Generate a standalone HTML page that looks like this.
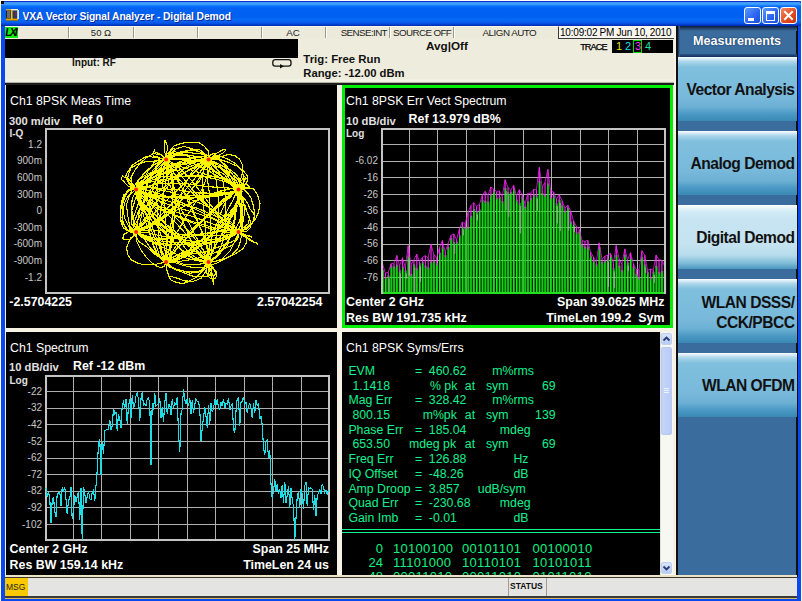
<!DOCTYPE html>
<html><head><meta charset="utf-8"><style>
html,body{margin:0;padding:0;}
body{width:802px;height:601px;overflow:hidden;position:relative;background:#fff;font-family:"Liberation Sans", sans-serif;}
.t{position:absolute;white-space:pre;font-family:"Liberation Sans", sans-serif;}
</style></head><body>
<div style="position:absolute;left:1px;top:1px;width:800px;height:600px;background:#0848f0;"></div><div style="position:absolute;left:1px;top:1px;width:800px;height:25px;background:linear-gradient(to bottom,#0a30c8 0px,#0a30c8 0.8px,#48a8ff 1.6px,#3898ff 3.5px,#0a72fa 5px,#0062f2 7px,#0060f0 16px,#0a6af8 19px,#0858e8 22px,#0040d0 23.5px,#0028a8 25px);border-radius:4px 4px 0 0;"></div><div style="position:absolute;left:1px;top:1px;width:3px;height:3px;background:#000;"></div><div style="position:absolute;left:5px;top:26px;width:792px;height:571px;background:#eeecdc;"></div><svg style="position:absolute;left:6px;top:9px" width="13" height="12" viewBox="0 0 13 12"><rect x="0" y="0" width="12" height="11.5" fill="#2a2010"/><rect x="0" y="0" width="5" height="1.5" fill="#c8a848"/><rect x="5" y="0" width="7" height="1.5" fill="#f4f0e0"/><rect x="0" y="9.5" width="12" height="2" fill="#e0a800"/><rect x="1" y="2" width="3.5" height="7" fill="#6a6a78"/><rect x="5" y="1.5" width="1.6" height="8.5" fill="#d8d020"/><rect x="7" y="2" width="4" height="7" fill="#3a3068"/><rect x="9.5" y="3" width="1.2" height="4" fill="#8a3030"/><rect x="11.2" y="1" width="1.8" height="9" fill="#c8f4ff"/></svg><div class="t" style="left:22.5px;top:12.28px;font-size:10.3px;line-height:10.3px;font-weight:bold;color:#fff;letter-spacing:-0.1px;text-shadow:1px 1px 0 #0a2a9a;">VXA Vector Signal Analyzer - Digital Demod</div><div style="position:absolute;left:744px;top:7px;width:15px;height:15px;border:1px solid #fff;border-radius:3px;background:linear-gradient(135deg,#5a9bff,#2a63f0 60%,#1f50d8);"></div><div style="position:absolute;left:762px;top:7px;width:15px;height:15px;border:1px solid #fff;border-radius:3px;background:linear-gradient(135deg,#5a9bff,#2a63f0 60%,#1f50d8);"></div><div style="position:absolute;left:780px;top:7px;width:15px;height:15px;border:1px solid #fff;border-radius:3px;background:linear-gradient(135deg,#f08a64,#e44c22 55%,#c83412);"></div><div style="position:absolute;left:748px;top:18px;width:6px;height:3px;background:#fff;"></div><div style="position:absolute;left:766px;top:11px;width:7px;height:6px;border:1.5px solid #fff;border-top-width:3px;"></div><svg style="position:absolute;left:781px;top:8px" width="15" height="15"><path d="M4 4 L11 11 M11 4 L4 11" stroke="#fff" stroke-width="2" stroke-linecap="square"/></svg><div style="position:absolute;left:5px;top:26px;width:669px;height:13px;background:#eceada;border-top:1px solid #fbf8ea;box-sizing:border-box;"></div><div style="position:absolute;left:5px;top:27px;width:13px;height:11px;background:#10ec10;"></div><div class="t" style="left:5.2px;top:27.41px;font-size:10.5px;line-height:10.5px;font-weight:bold;color:#000;font-style:italic;letter-spacing:-1.9px;">LXI</div><div style="position:absolute;left:68px;top:27px;width:1px;height:11px;background:#9c9a8c;"></div><div style="position:absolute;left:69px;top:27px;width:1px;height:11px;background:#fff;"></div><div style="position:absolute;left:133px;top:27px;width:1px;height:11px;background:#9c9a8c;"></div><div style="position:absolute;left:134px;top:27px;width:1px;height:11px;background:#fff;"></div><div style="position:absolute;left:197px;top:27px;width:1px;height:11px;background:#9c9a8c;"></div><div style="position:absolute;left:198px;top:27px;width:1px;height:11px;background:#fff;"></div><div style="position:absolute;left:261px;top:27px;width:1px;height:11px;background:#9c9a8c;"></div><div style="position:absolute;left:262px;top:27px;width:1px;height:11px;background:#fff;"></div><div style="position:absolute;left:325px;top:27px;width:1px;height:11px;background:#9c9a8c;"></div><div style="position:absolute;left:326px;top:27px;width:1px;height:11px;background:#fff;"></div><div style="position:absolute;left:389px;top:27px;width:1px;height:11px;background:#9c9a8c;"></div><div style="position:absolute;left:390px;top:27px;width:1px;height:11px;background:#fff;"></div><div style="position:absolute;left:453px;top:27px;width:1px;height:11px;background:#9c9a8c;"></div><div style="position:absolute;left:454px;top:27px;width:1px;height:11px;background:#fff;"></div><div style="position:absolute;left:558px;top:27px;width:1px;height:11px;background:#9c9a8c;"></div><div style="position:absolute;left:559px;top:27px;width:1px;height:11px;background:#fff;"></div><div class="t" style="left:101px;top:27.96px;font-size:9.5px;line-height:9.5px;font-weight:normal;color:#222;transform:translateX(-50%);">50 &#937;</div><div class="t" style="left:293px;top:27.90px;font-size:9.8px;line-height:9.8px;font-weight:normal;color:#222;transform:translateX(-50%);">AC</div><div class="t" style="left:-213px;width:600px;text-align:right;top:27.90px;font-size:9.8px;line-height:9.8px;font-weight:normal;color:#222;letter-spacing:-0.6px;">SENSE:INT</div><div class="t" style="left:393px;top:27.90px;font-size:9.8px;line-height:9.8px;font-weight:normal;color:#222;letter-spacing:-0.6px;">SOURCE OFF</div><div class="t" style="left:509.4px;top:27.90px;font-size:9.8px;line-height:9.8px;font-weight:normal;color:#222;transform:translateX(-50%);letter-spacing:-0.5px;">ALIGN AUTO</div><div style="position:absolute;left:558px;top:26px;width:116px;height:13px;background:#f8f6ee;border-left:1px solid #3a3a3a;border-bottom:1px solid #3a3a3a;border-top:1px solid #fbf8ea;box-sizing:border-box;"></div><div class="t" style="left:560.0px;top:27.54px;font-size:10px;line-height:10px;font-weight:normal;color:#000;word-spacing:-0.3px;letter-spacing:-0.2px;">10:09:02 PM Jun 10, 2010</div><div style="position:absolute;left:5px;top:39px;width:293px;height:19px;background:#000;"></div><div class="t" style="left:72px;top:58.13px;font-size:10px;line-height:10px;font-weight:bold;color:#111;">Input: RF</div><div class="t" style="left:303.3px;top:53.85px;font-size:11.4px;line-height:11.4px;font-weight:bold;color:#111;">Trig: Free Run</div><div class="t" style="left:303.3px;top:67.58px;font-size:11.25px;line-height:11.25px;font-weight:bold;color:#111;">Range: -12.00 dBm</div><div class="t" style="left:426px;top:40.10px;font-size:11.7px;line-height:11.7px;font-weight:bold;color:#111;">Avg|Off</div><div class="t" style="left:580.2px;top:42.51px;font-size:9.2px;line-height:9.2px;font-weight:normal;color:#000;letter-spacing:-0.95px;-webkit-text-stroke:0.25px #000;">TRACE</div><div style="position:absolute;left:612px;top:40px;width:61px;height:13px;background:#000;"></div><div class="t" style="left:616px;top:41.19px;font-size:11px;line-height:11px;font-weight:normal;color:#e8e000;">1</div><div class="t" style="left:625px;top:41.19px;font-size:11px;line-height:11px;font-weight:normal;color:#20d8f0;">2</div><div style="position:absolute;left:633px;top:40px;width:9px;height:13px;border:1px solid #00e000;box-sizing:border-box;"></div><div class="t" style="left:635px;top:41.19px;font-size:11px;line-height:11px;font-weight:normal;color:#ff30ff;">3</div><div class="t" style="left:645px;top:41.19px;font-size:11px;line-height:11px;font-weight:normal;color:#20e0a0;">4</div><svg style="position:absolute;left:271px;top:58px" width="22" height="12" viewBox="0 0 22 12"><rect x="1.8" y="1.6" width="18.2" height="6.6" rx="2.4" ry="2.4" fill="none" stroke="#111" stroke-width="1.3"/><path d="M9 6 L13 8.2 L9 10.6 Z" fill="#111"/></svg><div style="position:absolute;left:5px;top:79px;width:669px;height:3px;background:#f2f0e2;"></div><div style="position:absolute;left:5px;top:82px;width:669px;height:1px;background:#b4b2a2;"></div><div style="position:absolute;left:5px;top:83px;width:669px;height:2px;background:#1c1c1c;"></div><div style="position:absolute;left:5px;top:85px;width:669px;height:491px;background:#f6f3e6;"></div><div style="position:absolute;left:6px;top:85px;width:331px;height:243px;background:#000;"></div><div style="position:absolute;left:342px;top:85px;width:331px;height:243px;background:#000;"></div><div style="position:absolute;left:342px;top:85px;width:331px;height:243px;border:3px solid #00ee00;box-sizing:border-box;"></div><div style="position:absolute;left:6px;top:332px;width:331px;height:243px;background:#000;"></div><div style="position:absolute;left:342px;top:332px;width:331px;height:243px;background:#000;"></div><div class="t" style="left:10px;top:95.09px;font-size:12.3px;line-height:12.3px;font-weight:normal;color:#fff;">Ch1 8PSK Meas Time</div><div class="t" style="left:9px;top:115.82px;font-size:11.2px;line-height:11.2px;font-weight:bold;color:#e0e0e0;">300 m/div</div><div class="t" style="left:72.5px;top:113.90px;font-size:12.4px;line-height:12.4px;font-weight:bold;color:#fff;">Ref 0</div><div class="t" style="left:9.5px;top:129.03px;font-size:10px;line-height:10px;font-weight:bold;color:#e0e0e0;">I-Q</div><div class="t" style="left:-558px;width:600px;text-align:right;top:139.73px;font-size:10px;line-height:10px;font-weight:normal;color:#c8c8c8;">1.2</div><div class="t" style="left:-558px;width:600px;text-align:right;top:156.33px;font-size:10px;line-height:10px;font-weight:normal;color:#c8c8c8;">900m</div><div class="t" style="left:-558px;width:600px;text-align:right;top:172.94px;font-size:10px;line-height:10px;font-weight:normal;color:#c8c8c8;">600m</div><div class="t" style="left:-558px;width:600px;text-align:right;top:189.53px;font-size:10px;line-height:10px;font-weight:normal;color:#c8c8c8;">300m</div><div class="t" style="left:-558px;width:600px;text-align:right;top:206.13px;font-size:10px;line-height:10px;font-weight:normal;color:#c8c8c8;">0</div><div class="t" style="left:-558px;width:600px;text-align:right;top:222.73px;font-size:10px;line-height:10px;font-weight:normal;color:#c8c8c8;">-300m</div><div class="t" style="left:-558px;width:600px;text-align:right;top:239.33px;font-size:10px;line-height:10px;font-weight:normal;color:#c8c8c8;">-600m</div><div class="t" style="left:-558px;width:600px;text-align:right;top:255.94px;font-size:10px;line-height:10px;font-weight:normal;color:#c8c8c8;">-900m</div><div class="t" style="left:-558px;width:600px;text-align:right;top:272.54px;font-size:10px;line-height:10px;font-weight:normal;color:#c8c8c8;">-1.2</div><div class="t" style="left:9.3px;top:296.10px;font-size:12.4px;line-height:12.4px;font-weight:bold;color:#fff;">-2.5704225</div><div class="t" style="left:-277.5px;width:600px;text-align:right;top:296.10px;font-size:12.4px;line-height:12.4px;font-weight:bold;color:#fff;">2.57042254</div><svg style="position:absolute;left:0;top:0" width="802" height="601"><path d="M165.3 261.5 L165.3 258.0 L162.2 251.2 L157.1 239.6 L151.4 225.0 L145.2 211.3 L140.7 201.1 L137.8 191.7 L135.7 189.8 L135.8 193.0 L139.7 202.2 L142.7 212.8 L147.7 227.9 L152.6 242.4 L157.3 253.8 L162.5 260.7 L165.8 262.0 L169.4 256.9 L171.1 247.0 L172.8 233.1 L174.4 216.0 L175.6 198.0 L173.3 182.6 L171.5 169.1 L166.3 159.1 L160.6 154.8 L153.2 153.5 L146.2 157.9 L140.4 163.1 L134.8 170.3 L130.9 177.7 L131.5 183.6 L136.9 189.0 L144.0 193.7 L156.5 196.4 L169.7 196.7 L186.3 196.9 L202.7 198.1 L217.0 195.3 L229.2 193.9 L238.6 190.4 L244.5 185.9 L247.1 181.5 L247.1 175.5 L243.5 170.9 L237.1 166.1 L228.3 162.3 L219.1 159.1 L208.7 159.4 L196.6 160.5 L183.4 164.0 L172.0 168.3 L161.1 174.3 L148.6 179.8 L141.4 183.8 L137.7 187.8 L135.9 190.4 L139.4 190.0 L147.3 187.4 L158.2 183.2 L170.3 179.2 L184.0 172.8 L194.0 168.1 L204.1 163.7 L208.7 160.2 L208.6 156.1 L204.8 154.0 L197.0 153.9 L188.2 152.2 L177.7 152.9 L170.1 154.1 L165.1 156.9 L165.5 159.1 L171.2 163.9 L180.1 166.3 L193.4 170.8 L207.5 174.8 L221.5 178.6 L232.5 183.2 L238.9 186.5 L237.4 190.1 L232.2 192.7 L221.0 195.0 L205.2 195.7 L187.0 196.0 L167.3 197.2 L152.2 196.4 L141.7 193.3 L136.6 189.4 L137.2 184.5 L143.8 179.3 L155.0 172.2 L168.2 166.2 L183.0 160.7 L195.8 157.2 L204.1 156.9 L209.2 159.4 L205.8 166.5 L201.2 175.3 L192.3 188.4 L179.3 202.4 L166.2 213.8 L153.0 224.0 L142.2 230.6 L135.8 232.0 L134.0 227.8 L132.9 218.5 L137.3 206.5 L142.8 191.7 L150.3 178.6 L157.0 166.8 L163.0 161.0 L165.6 159.4 L168.3 164.7 L166.8 176.6 L163.9 191.7 L160.8 211.0 L158.2 228.3 L158.6 244.3 L161.8 255.5 L166.0 262.0 L174.3 261.4 L186.6 255.2 L199.9 245.8 L213.5 232.1 L225.4 217.5 L235.6 205.0 L240.8 194.9 L239.2 189.7 L231.5 188.2 L218.2 192.2 L201.5 197.9 L183.1 207.0 L164.4 216.4 L149.5 225.7 L139.2 229.6 L136.7 231.1 L139.3 229.1 L150.3 224.0 L165.6 215.4 L183.7 206.7 L202.2 198.3 L218.2 191.4 L230.8 188.7 L238.3 188.6 L239.8 196.7 L235.4 205.1 L227.2 218.3 L215.3 232.0 L201.7 244.3 L189.0 255.1 L176.1 260.6 L166.2 262.0 L158.9 257.1 L153.6 246.8 L149.6 231.9 L149.3 216.0 L150.1 198.2 L154.6 182.1 L159.6 168.8 L166.7 160.3 L175.4 155.6 L186.3 155.8 L198.7 159.8 L210.5 167.3 L221.4 175.9 L231.0 182.0 L235.8 188.7 L237.4 189.3 L235.8 188.5 L229.7 182.8 L221.1 176.1 L209.1 168.0 L197.1 160.3 L184.0 154.5 L175.3 154.8 L166.3 159.1 L159.8 169.5 L157.3 183.6 L156.9 201.3 L157.5 219.7 L158.9 236.9 L161.6 250.2 L164.3 259.3 L165.4 262.4 L167.3 257.8 L169.5 247.8 L171.7 231.9 L172.9 214.1 L172.3 195.8 L172.4 179.1 L170.1 166.6 L166.1 158.8 L160.7 158.6 L154.5 162.0 L147.8 171.5 L141.7 183.3 L135.7 197.9 L131.3 212.1 L131.4 223.3 L136.6 232.3 L144.5 238.1 L156.0 239.9 L171.9 238.5 L188.8 237.0 L204.9 233.5 L219.2 230.8 L231.6 230.2 L238.3 231.7 L241.5 235.0 L240.5 241.1 L238.0 248.2 L231.8 255.1 L223.5 259.5 L217.2 263.0 L211.9 264.7 L209.0 261.9 L208.4 257.1 L209.5 246.4 L212.3 235.6 L216.6 224.2 L221.6 211.1 L226.2 200.7 L233.1 193.1 L238.0 189.6 L243.5 189.2 L247.9 193.1 L251.0 198.0 L253.7 206.9 L254.7 214.5 L252.6 222.7 L246.8 228.9 L238.1 231.3 L226.5 232.4 L211.1 228.9 L194.0 223.4 L176.2 216.3 L160.5 208.1 L147.1 200.2 L140.1 194.3 L135.9 189.8 L139.3 187.3 L150.0 187.2 L163.0 188.6 L179.5 190.0 L198.0 193.0 L213.3 193.1 L228.8 192.6 L238.5 189.5 L243.9 184.6 L244.1 178.4 L242.2 171.4 L235.7 163.8 L228.2 159.2 L220.8 156.5 L213.3 156.0 L208.4 159.2 L204.2 166.0 L202.6 176.5 L203.0 190.7 L203.5 205.1 L204.9 220.4 L205.5 236.6 L207.1 249.3 L208.1 261.7 L209.9 271.4 L211.5 277.8 L213.0 281.7 L213.7 284.4 L213.5 281.7 L213.7 277.5 L211.3 271.3 L207.4 261.9 L203.6 251.1 L197.0 238.7 L189.8 224.5 L182.1 211.1 L173.9 195.5 L168.6 181.9 L166.1 169.8 L166.1 159.3 L169.3 151.7 L173.9 145.9 L182.0 143.2 L190.8 142.2 L199.3 143.0 L203.8 145.7 L209.0 151.9 L208.3 158.9 L204.6 168.7 L199.7 180.5 L189.4 192.0 L178.4 204.0 L167.7 215.0 L156.3 223.1 L145.1 229.0 L135.7 232.5 L128.3 230.3 L124.5 225.8 L120.6 219.2 L120.7 209.8 L123.5 201.6 L126.2 193.8 L131.0 189.3 L136.3 190.6 L142.4 193.3 L151.2 203.7 L158.8 214.7 L169.7 228.6 L180.1 241.1 L188.9 253.1 L199.9 260.0 L208.5 260.3 L216.5 257.9 L222.4 250.4 L228.9 239.7 L233.5 225.6 L234.8 213.2 L237.1 201.2 L237.8 192.6 L237.6 189.1 L238.9 191.5 L237.7 197.4 L236.5 207.5 L234.9 220.9 L230.4 233.3 L227.3 245.6 L217.8 254.6 L207.8 262.6 L197.3 264.6 L184.2 264.4 L170.0 259.6 L157.2 256.2 L147.3 247.3 L139.2 241.7 L135.5 235.7 L136.6 232.8 L141.2 230.7 L152.0 229.9 L164.4 231.0 L180.0 234.3 L195.4 235.2 L212.2 236.0 L226.4 235.1 L239.9 231.6 L247.9 226.6 L255.4 219.7 L258.6 211.8 L260.0 203.4 L257.5 194.9 L253.5 188.8 L245.7 187.6 L237.8 189.1 L228.9 196.3 L217.0 204.8 L205.0 217.6 L192.4 230.7 L182.2 243.0 L172.9 253.3 L167.7 260.0 L166.8 261.8 L169.3 258.6 L175.0 251.4 L185.1 239.9 L197.2 226.6 L209.7 212.5 L221.7 202.5 L231.2 193.5 L238.8 189.0 L241.0 189.9 L240.5 195.9 L238.1 204.8 L232.4 215.8 L225.4 228.0 L217.8 240.4 L211.8 252.5 L208.9 261.9 L208.1 269.5 L208.2 274.5 L210.2 275.8 L212.3 275.9 L214.4 275.4 L216.8 272.7 L212.9 267.4 L208.1 262.8 L200.2 255.7 L189.7 246.9 L176.6 236.9 L165.0 228.3 L153.5 217.9 L144.0 207.0 L137.7 198.9 L135.9 190.4 L137.2 181.0 L144.6 175.6 L153.0 171.8 L163.5 167.9 L176.3 165.2 L188.4 163.8 L199.3 160.3 L208.8 160.5 L216.6 156.3 L221.0 154.2 L224.7 151.7 L225.9 149.6 L224.0 149.3 L222.2 150.1 L216.0 153.7 L208.6 160.4 L198.8 168.2 L186.7 180.3 L175.1 192.7 L162.7 203.9 L151.0 216.9 L140.5 224.9 L137.7 230.4 L136.0 231.9 L139.5 227.3 L147.5 220.2 L158.4 208.8 L171.8 195.2 L185.4 181.9 L195.8 170.1 L204.7 161.5 L208.2 160.1 L207.6 161.9 L202.4 168.9 L193.9 179.6 L182.9 193.0 L169.7 205.6 L157.6 218.6 L146.5 227.8 L135.3 231.1 L129.2 231.5 L123.6 228.3 L120.8 221.6 L120.7 212.1 L121.2 202.8 L124.0 194.7 L130.0 189.8 L136.7 189.7 L145.1 192.3 L156.8 199.0 L166.2 208.3 L177.8 219.9 L189.7 232.0 L198.6 243.6 L205.9 253.7 L208.2 263.0 L207.0 267.9 L202.4 270.6 L194.2 271.9 L184.4 271.2 L176.0 269.4 L169.7 267.1 L165.7 264.1 L166.6 261.9 L172.2 260.0 L181.2 255.9 L193.1 253.6 L206.4 251.5 L220.2 246.3 L231.5 242.0 L237.9 238.2 L239.0 231.7 L233.9 226.2 L225.5 220.0 L212.2 214.7 L196.4 207.9 L178.0 204.1 L161.9 199.2 L147.8 194.2 L136.2 189.6 L127.6 185.8 L123.3 180.9 L121.1 179.3 L122.5 175.5 L124.0 177.2 L127.9 178.0 L130.7 181.6 L136.2 188.3 L140.1 199.4 L145.1 211.8 L148.9 224.2 L153.9 237.0 L157.0 247.9 L160.2 257.5 L164.1 261.3 L166.4 262.5 L166.7 256.7 L166.4 246.2 L166.6 233.8 L165.3 217.6 L163.8 201.3 L162.8 185.2 L163.5 170.5 L167.0 159.2 L171.1 153.6 L176.5 148.6 L183.9 146.4 L192.8 148.9 L200.2 152.2 L205.0 155.8 L208.0 158.4 L209.0 159.7 L205.3 161.2 L200.1 157.1 L191.4 155.7 L183.1 154.2 L174.8 151.7 L169.6 152.8 L166.0 154.2 L165.2 159.9 L169.5 166.0 L175.5 176.0 L184.7 184.7 L196.2 196.6 L207.4 206.2 L218.6 215.9 L228.8 225.6 L237.8 231.9 L246.0 237.9 L252.2 241.5 L257.1 243.4 L257.7 244.8 L257.3 243.3 L254.2 242.0 L248.1 238.0 L239.1 231.4 L227.0 225.7 L211.6 217.2 L196.6 209.8 L179.5 201.6 L163.2 194.9 L149.9 191.0 L140.8 189.0 L136.0 190.4 L136.6 193.2 L140.6 201.0 L149.7 210.2 L161.4 220.3 L175.3 231.8 L187.4 243.3 L200.0 252.9 L208.1 261.9 L213.9 269.5 L216.6 274.6 L216.1 276.8 L215.2 278.6 L210.2 278.1 L207.2 274.8 L206.6 269.2 L209.0 261.0 L211.4 253.0 L218.0 240.8 L224.0 229.0 L231.5 216.1 L236.2 205.2 L241.3 196.4 L242.1 191.0 L238.0 189.9 L232.6 193.2 L223.6 200.5 L210.1 213.6 L196.8 227.0 L184.8 240.3 L174.9 250.7 L169.0 258.4 L167.1 261.2 L168.2 259.0 L174.9 251.5 L184.4 240.4 L197.3 225.8 L210.9 211.8 L221.5 200.5 L232.7 192.7 L239.0 190.2 L241.4 192.1 L238.7 200.1 L233.3 210.9 L227.2 225.3 L219.5 238.8 L212.7 249.4 L209.1 258.2 L207.7 262.8 L211.9 261.3 L216.7 256.0 L224.1 246.4 L231.1 235.8 L239.4 221.8 L242.6 209.5 L243.5 198.8 L237.9 189.7 L229.3 182.9 L214.3 178.7 L198.3 175.7 L180.4 176.6 L162.7 176.2 L149.4 181.0 L139.6 184.3 L135.9 190.1 L139.0 196.0 L147.6 202.3 L159.9 210.0 L177.1 215.8 L194.7 222.3 L211.9 227.1 L227.5 230.4 L237.7 232.4 L247.1 231.0 L250.4 227.7 L250.4 221.7 L248.5 215.8 L245.8 208.9 L242.6 201.0 L239.8 194.9 L237.8 189.1 L238.5 185.4 L241.5 183.8 L244.8 184.5 L246.8 184.5 L249.3 187.0 L248.6 188.2 L245.2 188.7 L238.1 189.5 L229.6 188.1 L217.2 187.4 L203.2 186.1 L187.6 183.9 L171.6 183.5 L158.4 183.1 L146.5 187.0 L136.0 189.6 L128.3 195.8 L124.8 202.5 L122.9 210.7 L122.0 217.3 L124.2 225.1 L127.0 230.5 L132.0 232.3 L136.2 233.4 L141.5 227.2 L144.4 221.9 L149.8 211.2 L152.7 199.2 L156.6 189.3 L159.2 178.0 L163.1 168.9 L165.8 160.7 L168.8 153.6 L171.4 149.9 L173.4 148.6 L174.6 148.1 L174.0 149.9 L172.3 152.6 L170.7 155.7 L166.1 160.3 L160.6 165.7 L155.8 169.7 L149.1 174.8 L143.6 179.7 L137.6 184.6 L135.2 188.6 L135.7 190.5 L136.4 189.7 L140.4 186.7 L146.1 182.1 L154.7 176.2 L164.8 169.0 L175.4 164.4 L186.6 158.6 L196.9 156.6 L208.1 160.3 L218.0 165.1 L227.1 174.8 L234.1 186.5 L239.0 198.5 L241.9 210.9 L243.0 221.8 L242.2 227.9 L237.7 231.7 L232.5 231.6 L224.6 224.0 L215.2 215.5 L205.8 203.0 L194.1 191.7 L184.1 179.2 L175.0 168.2 L166.4 159.4 L159.9 153.8 L155.0 152.2 L154.4 149.9 L152.6 154.0 L153.6 156.2 L158.1 157.1 L160.6 158.6 L165.4 158.8 L170.9 158.0 L176.1 155.6 L181.2 151.4 L188.1 150.7 L193.9 149.1 L199.3 149.5 L203.9 153.0 L208.3 159.0 L212.1 169.0 L216.2 180.7 L218.1 194.3 L218.4 209.4 L218.4 223.9 L215.8 238.8 L213.4 251.4 L207.9 262.0 L202.6 271.2 L195.9 277.4 L187.6 282.0 L182.6 283.6 L176.1 282.3 L170.7 279.9 L167.3 272.6 L166.0 262.2 L166.2 248.3 L168.7 234.6 L172.4 217.1 L178.0 201.1 L184.4 186.3 L191.0 173.3 L199.1 164.0 L208.7 159.9 L217.3 159.0 L225.3 164.4 L232.1 173.4 L238.5 185.4 L242.6 197.8 L245.0 210.9 L242.8 222.3 L237.7 230.7 L229.9 237.9 L219.3 241.7 L206.4 242.2 L190.1 241.0 L175.4 238.3 L159.6 235.7 L146.5 232.4 L135.6 233.2 L128.9 231.6 L123.8 234.4 L123.0 237.1 L123.0 239.0 L126.7 239.9 L129.2 239.6 L132.8 237.3 L135.4 231.4 L139.7 225.1 L141.5 215.1 L143.5 203.0 L145.7 192.4 L148.4 181.0 L152.6 170.6 L158.8 163.4 L165.7 159.3 L175.2 158.3 L187.2 160.7 L197.3 165.0 L208.8 171.0 L220.1 177.6 L228.0 182.8 L235.8 187.5 L238.5 189.1 L238.1 189.1 L236.0 185.8 L230.6 183.0 L225.0 174.9 L217.8 170.6 L213.0 165.2 L208.1 161.6 L208.3 158.6 L211.1 160.7 L216.1 162.4 L222.7 166.2 L230.4 169.6 L237.0 175.4 L240.8 181.7 L241.8 185.9 L239.0 189.5 L231.1 193.0 L218.2 193.9 L204.5 196.0 L189.0 197.7 L173.6 196.6 L158.3 195.5 L146.0 193.4 L136.7 189.4 L130.5 184.3 L127.3 178.8 L129.2 172.5 L131.8 165.5 L138.1 161.3 L146.5 156.4 L154.7 157.3 L167.0 159.5 L178.1 166.4 L187.6 175.9 L198.2 188.7 L207.6 201.3 L218.6 214.8 L226.3 223.2 L232.8 230.0 L237.7 231.5 L241.3 229.0 L242.1 220.8 L240.8 209.8 L237.2 196.4 L231.5 183.8 L226.5 171.7 L218.1 164.9 L208.1 159.0 L197.7 161.2 L187.5 165.6 L177.8 174.5 L167.4 186.7 L157.7 200.5 L149.6 212.2 L141.4 223.0 L136.9 231.6 L132.2 237.6 L129.5 240.8 L129.4 241.7 L129.7 240.6 L130.3 238.3 L133.4 236.0 L133.4 233.8 L136.2 232.2 L137.8 231.0 L138.4 231.1 L139.5 230.5 L140.5 231.5 L138.9 231.5 L138.3 232.8 L137.5 232.9 L136.4 232.3 L134.8 231.2 L132.5 230.1 L129.7 228.5 L129.7 229.4 L129.1 227.7 L130.2 229.2 L131.1 230.1 L135.1 232.1 L141.4 235.4 L148.7 239.0 L157.4 244.8 L166.2 249.1 L176.3 254.2 L187.6 258.6 L196.8 260.6 L207.8 262.2 L218.5 260.7 L228.1 257.2 L235.9 253.6 L242.8 248.8 L246.0 243.6 L247.1 238.4 L244.8 234.7 L238.4 231.0 L228.4 230.8 L216.7 232.1 L202.3 233.9 L186.5 235.3 L171.9 238.1 L157.0 238.5 L144.4 235.5 L136.0 231.6 L129.5 225.5 L127.7 215.2 L126.4 204.6 L130.2 193.2 L136.9 182.0 L144.9 172.3 L154.6 164.3 L166.9 159.1 L178.6 158.2 L192.0 158.3 L206.4 162.6 L218.5 166.9 L229.7 172.1 L237.7 178.8 L240.2 184.8 L238.3 188.7 L230.9 193.1 L219.4 195.9 L203.8 197.2 L186.2 198.5 L168.3 197.1 L153.7 194.3 L141.6 192.3 L136.1 188.6 L136.6 186.2 L144.0 181.8 L154.4 176.6 L168.1 172.1 L181.9 169.5 L195.2 164.6 L204.8 161.8 L207.0 159.9 L206.7 158.4 L200.7 159.5 L190.8 160.5 L178.8 163.5 L165.4 168.7 L153.4 174.2 L143.4 182.7 L136.8 189.4 L132.1 198.8 L131.7 209.5 L133.3 219.6 L137.7 228.7 L143.1 237.0 L149.6 247.0 L158.0 255.7 L166.7 262.2 L174.2 269.0 L183.5 272.7 L192.1 275.9 L198.8 276.9 L207.3 276.0 L211.0 274.4 L211.7 268.3 L209.0 262.1 L201.8 252.2 L191.6 240.8 L181.2 228.5 L168.6 215.5 L156.1 203.8 L145.8 193.9 L139.6 189.9 L136.5 190.5 L137.5 194.3 L142.8 203.5 L153.3 216.9 L163.7 230.2 L175.6 243.9 L187.0 255.6 L198.1 260.8 L207.0 262.8 L215.9 257.1 L221.6 245.3 L224.6 231.2 L226.0 214.0 L225.2 195.0 L222.5 178.6 L215.5 166.6 L207.8 159.9 L198.5 159.2 L185.8 162.0 L172.4 170.8 L158.2 183.1 L147.8 196.4 L138.5 211.1 L134.4 221.8 L135.6 231.3 L143.6 238.6 L156.1 242.8 L172.4 244.8 L191.6 244.3 L209.3 243.6 L223.8 239.7 L233.8 235.7 L238.2 232.5 L236.4 228.8 L226.3 223.9 L214.5 219.6 L197.5 213.4 L180.8 208.7 L162.6 202.5 L147.3 195.3 L136.1 190.2 L128.6 183.2 L125.7 176.6 L127.0 172.9 L130.1 168.3 L137.8 164.2 L145.3 161.8 L155.4 160.9 L165.7 159.9 L177.2 159.6 L188.6 160.0 L199.3 160.3 L208.7 163.2 L218.5 167.1 L227.1 172.7 L233.9 179.4 L239.1 191.1 L241.3 201.4 L240.9 213.9 L239.9 227.8 L235.3 240.6 L230.3 250.6 L222.7 258.6 L216.0 261.5 L208.7 262.3 L201.5 256.5 L194.0 247.9 L188.3 233.7 L181.5 218.5 L177.2 202.4 L173.4 186.1 L169.4 171.6 L166.3 159.4 L164.4 150.2 L164.6 143.5 L164.1 140.6 L165.1 140.8 L166.2 142.9 L167.9 146.9 L166.8 151.9 L166.4 159.6 L163.8 167.3 L159.4 176.2 L153.9 183.9 L148.6 193.3 L142.6 202.8 L139.2 212.5 L137.5 222.0 L136.9 232.9 L136.9 241.7 L141.1 250.0 L145.8 256.8 L151.9 262.8 L156.9 266.3 L161.3 267.8 L164.2 266.1 L166.2 262.3 L165.8 255.0 L164.1 245.4 L160.7 234.4 L155.9 222.2 L151.9 211.3 L146.7 201.5 L141.3 194.1 L136.3 188.8 L132.1 188.5 L128.0 189.8 L125.2 195.1 L122.9 201.3 L122.9 209.2 L124.5 217.7 L128.4 225.9 L135.5 231.8 L146.3 237.0 L158.4 240.7 L172.7 242.4 L186.3 242.6 L202.5 240.0 L216.8 239.2 L228.7 236.7 L238.3 232.9 L244.0 227.2 L248.3 223.7 L249.7 217.2 L247.0 212.2 L245.3 206.1 L241.7 200.5 L239.9 194.4 L239.2 189.8 L238.5 185.0 L240.1 181.5 L242.4 179.6 L244.2 176.5 L246.5 178.3 L244.7 179.5 L243.3 183.3 L237.4 189.4 L229.9 197.5 L220.8 204.7 L208.5 215.8 L196.9 224.6 L186.4 234.4 L176.4 245.5 L171.4 253.4 L166.0 262.4 L166.6 268.8 L169.0 276.0 L176.9 278.1 L184.8 281.0 L193.8 281.2 L201.0 278.3 L205.9 271.0 L207.4 261.6 L207.8 248.5 L202.6 233.0 L195.2 215.4 L188.0 197.6 L178.3 181.9 L171.8 168.7 L166.3 160.1 L165.9 159.2 L167.3 163.9 L175.4 174.8 L182.5 189.1 L191.3 208.6 L200.0 227.7 L206.8 244.6 L210.1 255.4 L208.6 261.7 L202.0 261.9 L192.7 258.0 L178.8 247.6 L165.2 233.6 L152.3 221.3 L141.1 207.8 L136.2 196.7 L135.8 190.0 L143.6 186.4 L153.9 188.4 L170.3 191.9 L188.6 198.6 L206.4 205.9 L222.0 215.0 L232.9 223.6 L238.5 232.5 L237.8 238.4 L231.7 245.5 L221.1 250.0 L206.8 256.0 L193.4 259.2 L180.1 261.3 L170.3 261.3 L165.8 262.5 L166.0 260.5 L171.5 257.9 L180.8 253.3 L192.8 249.3 L206.5 243.5 L219.0 240.2 L229.6 234.2 L238.8 232.0 L244.1 230.1 L247.2 227.4 L247.5 227.2 L245.1 227.7 L243.0 227.1 L240.9 229.2 L238.8 231.0 L237.9 231.8 L239.9 233.2 L242.3 234.8 L246.9 237.3 L249.7 236.5 L251.6 237.3 L251.7 236.4 L247.0 235.5 L238.6 232.4 L225.4 228.4 L210.8 223.3 L193.1 216.6 L175.4 211.9 L158.4 206.1 L146.3 199.6 L138.6 193.9 L135.9 189.1 L140.0 185.1 L151.5 181.7 L166.7 178.9 L185.4 176.0 L203.2 176.0 L219.2 177.2 L231.1 181.2 L238.5 189.8 L237.6 199.6 L232.7 211.4 L223.2 225.5 L209.2 237.4 L194.8 248.4 L181.5 256.0 L170.9 262.9 L165.9 261.4 L165.8 255.6 L169.8 247.2 L176.6 232.9 L186.8 215.8 L196.9 200.1 L204.3 183.8 L209.4 169.7 L208.5 158.7 L202.8 152.7 L194.8 150.7 L182.9 151.2 L169.7 156.3 L156.6 163.1 L146.3 170.7 L138.8 179.8 L136.2 189.4 L138.5 199.4 L145.9 210.1 L157.5 221.1 L170.6 231.1 L182.9 239.9 L194.6 248.0 L203.3 256.5 L208.6 262.2 L209.4 265.5 L206.1 268.6 L200.6 267.7 L191.2 267.2 L183.1 265.3 L175.1 262.8 L169.5 262.3 L166.0 261.3 L165.8 263.7 L169.5 266.0 L174.8 268.7 L182.5 270.8 L190.2 273.2 L199.4 271.9 L203.0 268.4 L207.8 261.3 L211.6 252.2 L211.4 238.9 L210.2 223.8 L209.9 207.5 L209.4 193.2 L207.4 179.0 L207.9 167.7 L207.8 161.4 L210.3 154.7 L213.7 153.6 L217.2 156.1 L220.7 160.5 L224.9 166.5 L229.2 173.8 L233.5 181.8 L238.2 189.9 L242.7 196.8 L247.5 202.9 L250.2 209.2 L253.7 213.6 L254.9 218.1 L252.1 222.8 L246.7 228.0 L238.0 232.1 L226.5 237.5 L211.8 239.7 L196.5 242.6 L179.8 244.5 L164.7 245.4 L151.3 241.7 L141.9 237.6 L137.0 232.2 L135.9 223.5 L140.6 214.5 L147.3 204.9 L157.0 193.0 L170.1 182.8 L183.5 173.3 L196.3 165.5 L208.9 160.3 L219.7 157.1 L229.0 154.3 L235.2 155.9 L239.5 159.0 L242.5 165.1 L242.3 172.9 L240.4 180.8 L237.9 188.9 L233.0 200.0 L226.0 212.6 L218.8 223.0 L208.2 233.9 L197.9 242.9 L189.0 250.1 L176.1 257.9 L166.5 261.8 L155.6 264.4 L144.7 264.8 L138.3 263.4 L131.1 259.7 L127.5 254.0 L126.6 247.7 L129.5 240.0" fill="none" stroke="#f8f400" stroke-width="1.1" stroke-linejoin="round" shape-rendering="crispEdges"/><circle cx="238.5" cy="189.6" r="2" fill="#ff2010"/><circle cx="208.5" cy="159.6" r="2" fill="#ff2010"/><circle cx="166.1" cy="159.6" r="2" fill="#ff2010"/><circle cx="136.1" cy="189.6" r="2" fill="#ff2010"/><circle cx="136.1" cy="232.0" r="2" fill="#ff2010"/><circle cx="166.1" cy="262.0" r="2" fill="#ff2010"/><circle cx="208.5" cy="262.0" r="2" fill="#ff2010"/><circle cx="238.5" cy="232.0" r="2" fill="#ff2010"/><rect x="46" y="129" width="283" height="164" fill="none" stroke="#c4c4c4" stroke-width="2"/></svg><div class="t" style="left:346px;top:94.89px;font-size:12.3px;line-height:12.3px;font-weight:normal;color:#fff;">Ch1 8PSK Err Vect Spectrum</div><div class="t" style="left:346px;top:115.82px;font-size:11.2px;line-height:11.2px;font-weight:bold;color:#e0e0e0;">10 dB/div</div><div class="t" style="left:408.6px;top:113.20px;font-size:12.4px;line-height:12.4px;font-weight:bold;color:#fff;">Ref 13.979 dB%</div><div class="t" style="left:346px;top:129.03px;font-size:10px;line-height:10px;font-weight:bold;color:#e0e0e0;">Log</div><div class="t" style="left:-222px;width:600px;text-align:right;top:156.33px;font-size:10px;line-height:10px;font-weight:normal;color:#c8c8c8;">-6.02</div><div class="t" style="left:-222px;width:600px;text-align:right;top:172.94px;font-size:10px;line-height:10px;font-weight:normal;color:#c8c8c8;">-16</div><div class="t" style="left:-222px;width:600px;text-align:right;top:189.53px;font-size:10px;line-height:10px;font-weight:normal;color:#c8c8c8;">-26</div><div class="t" style="left:-222px;width:600px;text-align:right;top:206.13px;font-size:10px;line-height:10px;font-weight:normal;color:#c8c8c8;">-36</div><div class="t" style="left:-222px;width:600px;text-align:right;top:222.73px;font-size:10px;line-height:10px;font-weight:normal;color:#c8c8c8;">-46</div><div class="t" style="left:-222px;width:600px;text-align:right;top:239.33px;font-size:10px;line-height:10px;font-weight:normal;color:#c8c8c8;">-56</div><div class="t" style="left:-222px;width:600px;text-align:right;top:255.94px;font-size:10px;line-height:10px;font-weight:normal;color:#c8c8c8;">-66</div><div class="t" style="left:-222px;width:600px;text-align:right;top:272.54px;font-size:10px;line-height:10px;font-weight:normal;color:#c8c8c8;">-76</div><svg style="position:absolute;left:0;top:0" width="802" height="601"><line x1="409.5" y1="128" x2="409.5" y2="294" stroke="#b0b0b0" stroke-width="1"/><line x1="381" y1="144.5" x2="666" y2="144.5" stroke="#b0b0b0" stroke-width="1"/><line x1="437.5" y1="128" x2="437.5" y2="294" stroke="#b0b0b0" stroke-width="1"/><line x1="381" y1="161.5" x2="666" y2="161.5" stroke="#b0b0b0" stroke-width="1"/><line x1="466.5" y1="128" x2="466.5" y2="294" stroke="#b0b0b0" stroke-width="1"/><line x1="381" y1="177.5" x2="666" y2="177.5" stroke="#b0b0b0" stroke-width="1"/><line x1="494.5" y1="128" x2="494.5" y2="294" stroke="#b0b0b0" stroke-width="1"/><line x1="381" y1="194.5" x2="666" y2="194.5" stroke="#b0b0b0" stroke-width="1"/><line x1="523.5" y1="128" x2="523.5" y2="294" stroke="#b0b0b0" stroke-width="1"/><line x1="381" y1="211.5" x2="666" y2="211.5" stroke="#b0b0b0" stroke-width="1"/><line x1="551.5" y1="128" x2="551.5" y2="294" stroke="#b0b0b0" stroke-width="1"/><line x1="381" y1="227.5" x2="666" y2="227.5" stroke="#b0b0b0" stroke-width="1"/><line x1="580.5" y1="128" x2="580.5" y2="294" stroke="#b0b0b0" stroke-width="1"/><line x1="381" y1="244.5" x2="666" y2="244.5" stroke="#b0b0b0" stroke-width="1"/><line x1="608.5" y1="128" x2="608.5" y2="294" stroke="#b0b0b0" stroke-width="1"/><line x1="381" y1="260.5" x2="666" y2="260.5" stroke="#b0b0b0" stroke-width="1"/><line x1="637.5" y1="128" x2="637.5" y2="294" stroke="#b0b0b0" stroke-width="1"/><line x1="381" y1="277.5" x2="666" y2="277.5" stroke="#b0b0b0" stroke-width="1"/><g opacity="0.9"><rect x="382.00" y="270.0" width="2.0" height="24.0" fill="#00b400"/><rect x="382.00" y="270.0" width="1" height="24.0" fill="#28ff28"/><rect x="384.85" y="276.9" width="2.0" height="17.1" fill="#00b400"/><rect x="384.85" y="276.9" width="1" height="17.1" fill="#28ff28"/><rect x="387.70" y="275.7" width="2.0" height="18.3" fill="#00b400"/><rect x="387.70" y="275.7" width="1" height="18.3" fill="#28ff28"/><rect x="388.70" y="278.7" width="1" height="13.3" fill="#b8b8b8"/><rect x="390.55" y="265.7" width="2.0" height="28.3" fill="#00b400"/><rect x="390.55" y="265.7" width="1" height="28.3" fill="#28ff28"/><rect x="393.40" y="266.5" width="2.0" height="27.5" fill="#00b400"/><rect x="393.40" y="266.5" width="1" height="27.5" fill="#28ff28"/><rect x="396.25" y="264.8" width="2.0" height="29.2" fill="#00b400"/><rect x="396.25" y="264.8" width="1" height="29.2" fill="#28ff28"/><rect x="399.10" y="270.3" width="2.0" height="23.7" fill="#00b400"/><rect x="399.10" y="270.3" width="1" height="23.7" fill="#28ff28"/><rect x="400.10" y="273.3" width="1" height="17.8" fill="#b8b8b8"/><rect x="401.95" y="266.5" width="2.0" height="27.5" fill="#00b400"/><rect x="401.95" y="266.5" width="1" height="27.5" fill="#28ff28"/><rect x="404.80" y="270.4" width="2.0" height="23.6" fill="#00b400"/><rect x="404.80" y="270.4" width="1" height="23.6" fill="#28ff28"/><rect x="405.80" y="273.4" width="1" height="5.3" fill="#b8b8b8"/><rect x="407.65" y="255.7" width="2.0" height="38.3" fill="#00b400"/><rect x="407.65" y="255.7" width="1" height="38.3" fill="#28ff28"/><rect x="408.65" y="258.7" width="1" height="16.5" fill="#b8b8b8"/><rect x="410.50" y="274.1" width="2.0" height="19.9" fill="#00b400"/><rect x="410.50" y="274.1" width="1" height="19.9" fill="#28ff28"/><rect x="413.35" y="264.5" width="2.0" height="29.5" fill="#00b400"/><rect x="413.35" y="264.5" width="1" height="29.5" fill="#28ff28"/><rect x="414.35" y="267.5" width="1" height="24.5" fill="#b8b8b8"/><rect x="416.20" y="268.3" width="2.0" height="25.7" fill="#00b400"/><rect x="416.20" y="268.3" width="1" height="25.7" fill="#28ff28"/><rect x="419.05" y="263.4" width="2.0" height="30.6" fill="#00b400"/><rect x="419.05" y="263.4" width="1" height="30.6" fill="#28ff28"/><rect x="420.05" y="266.4" width="1" height="15.5" fill="#b8b8b8"/><rect x="421.90" y="261.6" width="2.0" height="32.4" fill="#00b400"/><rect x="421.90" y="261.6" width="1" height="32.4" fill="#28ff28"/><rect x="424.75" y="265.8" width="2.0" height="28.2" fill="#00b400"/><rect x="424.75" y="265.8" width="1" height="28.2" fill="#28ff28"/><rect x="427.60" y="267.4" width="2.0" height="26.6" fill="#00b400"/><rect x="427.60" y="267.4" width="1" height="26.6" fill="#28ff28"/><rect x="430.45" y="261.3" width="2.0" height="32.7" fill="#00b400"/><rect x="430.45" y="261.3" width="1" height="32.7" fill="#28ff28"/><rect x="433.30" y="260.9" width="2.0" height="33.1" fill="#00b400"/><rect x="433.30" y="260.9" width="1" height="33.1" fill="#28ff28"/><rect x="436.15" y="263.3" width="2.0" height="30.7" fill="#00b400"/><rect x="436.15" y="263.3" width="1" height="30.7" fill="#28ff28"/><rect x="439.00" y="252.6" width="2.0" height="41.4" fill="#00b400"/><rect x="439.00" y="252.6" width="1" height="41.4" fill="#28ff28"/><rect x="441.85" y="246.9" width="2.0" height="47.1" fill="#00b400"/><rect x="441.85" y="246.9" width="1" height="47.1" fill="#28ff28"/><rect x="444.70" y="255.2" width="2.0" height="38.8" fill="#00b400"/><rect x="444.70" y="255.2" width="1" height="38.8" fill="#28ff28"/><rect x="447.55" y="247.1" width="2.0" height="46.9" fill="#00b400"/><rect x="447.55" y="247.1" width="1" height="46.9" fill="#28ff28"/><rect x="450.40" y="238.1" width="2.0" height="55.9" fill="#00b400"/><rect x="450.40" y="238.1" width="1" height="55.9" fill="#28ff28"/><rect x="453.25" y="241.9" width="2.0" height="52.1" fill="#00b400"/><rect x="453.25" y="241.9" width="1" height="52.1" fill="#28ff28"/><rect x="454.25" y="244.9" width="1" height="9.0" fill="#b8b8b8"/><rect x="456.10" y="241.7" width="2.0" height="52.3" fill="#00b400"/><rect x="456.10" y="241.7" width="1" height="52.3" fill="#28ff28"/><rect x="458.95" y="235.5" width="2.0" height="58.5" fill="#00b400"/><rect x="458.95" y="235.5" width="1" height="58.5" fill="#28ff28"/><rect x="461.80" y="226.3" width="2.0" height="67.7" fill="#00b400"/><rect x="461.80" y="226.3" width="1" height="67.7" fill="#28ff28"/><rect x="462.80" y="229.3" width="1" height="6.3" fill="#b8b8b8"/><rect x="464.65" y="227.1" width="2.0" height="66.9" fill="#00b400"/><rect x="464.65" y="227.1" width="1" height="66.9" fill="#28ff28"/><rect x="467.50" y="226.8" width="2.0" height="67.2" fill="#00b400"/><rect x="467.50" y="226.8" width="1" height="67.2" fill="#28ff28"/><rect x="470.35" y="215.8" width="2.0" height="78.2" fill="#00b400"/><rect x="470.35" y="215.8" width="1" height="78.2" fill="#28ff28"/><rect x="473.20" y="209.0" width="2.0" height="85.0" fill="#00b400"/><rect x="473.20" y="209.0" width="1" height="85.0" fill="#28ff28"/><rect x="476.05" y="211.4" width="2.0" height="82.6" fill="#00b400"/><rect x="476.05" y="211.4" width="1" height="82.6" fill="#28ff28"/><rect x="477.05" y="214.4" width="1" height="6.1" fill="#b8b8b8"/><rect x="478.90" y="209.4" width="2.0" height="84.6" fill="#00b400"/><rect x="478.90" y="209.4" width="1" height="84.6" fill="#28ff28"/><rect x="481.75" y="200.0" width="2.0" height="94.0" fill="#00b400"/><rect x="481.75" y="200.0" width="1" height="94.0" fill="#28ff28"/><rect x="484.60" y="200.9" width="2.0" height="93.1" fill="#00b400"/><rect x="484.60" y="200.9" width="1" height="93.1" fill="#28ff28"/><rect x="487.45" y="201.7" width="2.0" height="92.3" fill="#00b400"/><rect x="487.45" y="201.7" width="1" height="92.3" fill="#28ff28"/><rect x="490.30" y="194.6" width="2.0" height="99.4" fill="#00b400"/><rect x="490.30" y="194.6" width="1" height="99.4" fill="#28ff28"/><rect x="493.15" y="191.1" width="2.0" height="102.9" fill="#00b400"/><rect x="493.15" y="191.1" width="1" height="102.9" fill="#28ff28"/><rect x="496.00" y="197.4" width="2.0" height="96.6" fill="#00b400"/><rect x="496.00" y="197.4" width="1" height="96.6" fill="#28ff28"/><rect x="498.85" y="196.7" width="2.0" height="97.3" fill="#00b400"/><rect x="498.85" y="196.7" width="1" height="97.3" fill="#28ff28"/><rect x="501.70" y="201.2" width="2.0" height="92.8" fill="#00b400"/><rect x="501.70" y="201.2" width="1" height="92.8" fill="#28ff28"/><rect x="504.55" y="188.0" width="2.0" height="106.0" fill="#00b400"/><rect x="504.55" y="188.0" width="1" height="106.0" fill="#28ff28"/><rect x="505.55" y="191.0" width="1" height="19.4" fill="#b8b8b8"/><rect x="507.40" y="192.2" width="2.0" height="101.8" fill="#00b400"/><rect x="507.40" y="192.2" width="1" height="101.8" fill="#28ff28"/><rect x="508.40" y="195.2" width="1" height="21.6" fill="#b8b8b8"/><rect x="510.25" y="192.2" width="2.0" height="101.8" fill="#00b400"/><rect x="510.25" y="192.2" width="1" height="101.8" fill="#28ff28"/><rect x="513.10" y="188.3" width="2.0" height="105.7" fill="#00b400"/><rect x="513.10" y="188.3" width="1" height="105.7" fill="#28ff28"/><rect x="515.95" y="199.6" width="2.0" height="94.4" fill="#00b400"/><rect x="515.95" y="199.6" width="1" height="94.4" fill="#28ff28"/><rect x="518.80" y="202.8" width="2.0" height="91.2" fill="#00b400"/><rect x="518.80" y="202.8" width="1" height="91.2" fill="#28ff28"/><rect x="519.80" y="205.8" width="1" height="27.6" fill="#b8b8b8"/><rect x="521.65" y="196.8" width="2.0" height="97.2" fill="#00b400"/><rect x="521.65" y="196.8" width="1" height="97.2" fill="#28ff28"/><rect x="524.50" y="206.7" width="2.0" height="87.3" fill="#00b400"/><rect x="524.50" y="206.7" width="1" height="87.3" fill="#28ff28"/><rect x="527.35" y="201.4" width="2.0" height="92.6" fill="#00b400"/><rect x="527.35" y="201.4" width="1" height="92.6" fill="#28ff28"/><rect x="530.20" y="198.2" width="2.0" height="95.8" fill="#00b400"/><rect x="530.20" y="198.2" width="1" height="95.8" fill="#28ff28"/><rect x="533.05" y="194.8" width="2.0" height="99.2" fill="#00b400"/><rect x="533.05" y="194.8" width="1" height="99.2" fill="#28ff28"/><rect x="535.90" y="195.6" width="2.0" height="98.4" fill="#00b400"/><rect x="535.90" y="195.6" width="1" height="98.4" fill="#28ff28"/><rect x="536.90" y="198.6" width="1" height="12.3" fill="#b8b8b8"/><rect x="538.75" y="180.9" width="2.0" height="113.1" fill="#00b400"/><rect x="538.75" y="180.9" width="1" height="113.1" fill="#28ff28"/><rect x="541.60" y="193.1" width="2.0" height="100.9" fill="#00b400"/><rect x="541.60" y="193.1" width="1" height="100.9" fill="#28ff28"/><rect x="544.45" y="194.8" width="2.0" height="99.2" fill="#00b400"/><rect x="544.45" y="194.8" width="1" height="99.2" fill="#28ff28"/><rect x="547.30" y="183.6" width="2.0" height="110.4" fill="#00b400"/><rect x="547.30" y="183.6" width="1" height="110.4" fill="#28ff28"/><rect x="550.15" y="197.1" width="2.0" height="96.9" fill="#00b400"/><rect x="550.15" y="197.1" width="1" height="96.9" fill="#28ff28"/><rect x="553.00" y="195.7" width="2.0" height="98.3" fill="#00b400"/><rect x="553.00" y="195.7" width="1" height="98.3" fill="#28ff28"/><rect x="555.85" y="203.2" width="2.0" height="90.8" fill="#00b400"/><rect x="555.85" y="203.2" width="1" height="90.8" fill="#28ff28"/><rect x="556.85" y="206.2" width="1" height="17.2" fill="#b8b8b8"/><rect x="558.70" y="199.8" width="2.0" height="94.2" fill="#00b400"/><rect x="558.70" y="199.8" width="1" height="94.2" fill="#28ff28"/><rect x="559.70" y="202.8" width="1" height="28.4" fill="#b8b8b8"/><rect x="561.55" y="205.5" width="2.0" height="88.5" fill="#00b400"/><rect x="561.55" y="205.5" width="1" height="88.5" fill="#28ff28"/><rect x="564.40" y="210.8" width="2.0" height="83.2" fill="#00b400"/><rect x="564.40" y="210.8" width="1" height="83.2" fill="#28ff28"/><rect x="567.25" y="207.7" width="2.0" height="86.3" fill="#00b400"/><rect x="567.25" y="207.7" width="1" height="86.3" fill="#28ff28"/><rect x="568.25" y="210.7" width="1" height="19.9" fill="#b8b8b8"/><rect x="570.10" y="221.5" width="2.0" height="72.5" fill="#00b400"/><rect x="570.10" y="221.5" width="1" height="72.5" fill="#28ff28"/><rect x="572.95" y="223.3" width="2.0" height="70.7" fill="#00b400"/><rect x="572.95" y="223.3" width="1" height="70.7" fill="#28ff28"/><rect x="573.95" y="226.3" width="1" height="5.8" fill="#b8b8b8"/><rect x="575.80" y="232.3" width="2.0" height="61.7" fill="#00b400"/><rect x="575.80" y="232.3" width="1" height="61.7" fill="#28ff28"/><rect x="578.65" y="231.7" width="2.0" height="62.3" fill="#00b400"/><rect x="578.65" y="231.7" width="1" height="62.3" fill="#28ff28"/><rect x="581.50" y="244.9" width="2.0" height="49.1" fill="#00b400"/><rect x="581.50" y="244.9" width="1" height="49.1" fill="#28ff28"/><rect x="584.35" y="246.6" width="2.0" height="47.4" fill="#00b400"/><rect x="584.35" y="246.6" width="1" height="47.4" fill="#28ff28"/><rect x="587.20" y="246.7" width="2.0" height="47.3" fill="#00b400"/><rect x="587.20" y="246.7" width="1" height="47.3" fill="#28ff28"/><rect x="590.05" y="255.5" width="2.0" height="38.5" fill="#00b400"/><rect x="590.05" y="255.5" width="1" height="38.5" fill="#28ff28"/><rect x="592.90" y="260.2" width="2.0" height="33.8" fill="#00b400"/><rect x="592.90" y="260.2" width="1" height="33.8" fill="#28ff28"/><rect x="595.75" y="264.3" width="2.0" height="29.7" fill="#00b400"/><rect x="595.75" y="264.3" width="1" height="29.7" fill="#28ff28"/><rect x="598.60" y="247.0" width="2.0" height="47.0" fill="#00b400"/><rect x="598.60" y="247.0" width="1" height="47.0" fill="#28ff28"/><rect x="601.45" y="261.8" width="2.0" height="32.2" fill="#00b400"/><rect x="601.45" y="261.8" width="1" height="32.2" fill="#28ff28"/><rect x="604.30" y="260.7" width="2.0" height="33.3" fill="#00b400"/><rect x="604.30" y="260.7" width="1" height="33.3" fill="#28ff28"/><rect x="607.15" y="258.8" width="2.0" height="35.2" fill="#00b400"/><rect x="607.15" y="258.8" width="1" height="35.2" fill="#28ff28"/><rect x="608.15" y="261.8" width="1" height="25.0" fill="#b8b8b8"/><rect x="610.00" y="255.0" width="2.0" height="39.0" fill="#00b400"/><rect x="610.00" y="255.0" width="1" height="39.0" fill="#28ff28"/><rect x="612.85" y="268.3" width="2.0" height="25.7" fill="#00b400"/><rect x="612.85" y="268.3" width="1" height="25.7" fill="#28ff28"/><rect x="613.85" y="271.3" width="1" height="16.7" fill="#b8b8b8"/><rect x="615.70" y="255.0" width="2.0" height="39.0" fill="#00b400"/><rect x="615.70" y="255.0" width="1" height="39.0" fill="#28ff28"/><rect x="618.55" y="265.6" width="2.0" height="28.4" fill="#00b400"/><rect x="618.55" y="265.6" width="1" height="28.4" fill="#28ff28"/><rect x="621.40" y="270.2" width="2.0" height="23.8" fill="#00b400"/><rect x="621.40" y="270.2" width="1" height="23.8" fill="#28ff28"/><rect x="624.25" y="254.9" width="2.0" height="39.1" fill="#00b400"/><rect x="624.25" y="254.9" width="1" height="39.1" fill="#28ff28"/><rect x="627.10" y="262.6" width="2.0" height="31.4" fill="#00b400"/><rect x="627.10" y="262.6" width="1" height="31.4" fill="#28ff28"/><rect x="628.10" y="265.6" width="1" height="5.3" fill="#b8b8b8"/><rect x="629.95" y="257.6" width="2.0" height="36.4" fill="#00b400"/><rect x="629.95" y="257.6" width="1" height="36.4" fill="#28ff28"/><rect x="632.80" y="266.7" width="2.0" height="27.3" fill="#00b400"/><rect x="632.80" y="266.7" width="1" height="27.3" fill="#28ff28"/><rect x="635.65" y="274.3" width="2.0" height="19.7" fill="#00b400"/><rect x="635.65" y="274.3" width="1" height="19.7" fill="#28ff28"/><rect x="638.50" y="277.6" width="2.0" height="16.4" fill="#00b400"/><rect x="638.50" y="277.6" width="1" height="16.4" fill="#28ff28"/><rect x="641.35" y="257.3" width="2.0" height="36.7" fill="#00b400"/><rect x="641.35" y="257.3" width="1" height="36.7" fill="#28ff28"/><rect x="644.20" y="264.5" width="2.0" height="29.5" fill="#00b400"/><rect x="644.20" y="264.5" width="1" height="29.5" fill="#28ff28"/><rect x="645.20" y="267.5" width="1" height="5.7" fill="#b8b8b8"/><rect x="647.05" y="272.1" width="2.0" height="21.9" fill="#00b400"/><rect x="647.05" y="272.1" width="1" height="21.9" fill="#28ff28"/><rect x="649.90" y="277.5" width="2.0" height="16.5" fill="#00b400"/><rect x="649.90" y="277.5" width="1" height="16.5" fill="#28ff28"/><rect x="652.75" y="271.7" width="2.0" height="22.3" fill="#00b400"/><rect x="652.75" y="271.7" width="1" height="22.3" fill="#28ff28"/><rect x="653.75" y="274.7" width="1" height="8.2" fill="#b8b8b8"/><rect x="655.60" y="265.8" width="2.0" height="28.2" fill="#00b400"/><rect x="655.60" y="265.8" width="1" height="28.2" fill="#28ff28"/><rect x="658.45" y="272.1" width="2.0" height="21.9" fill="#00b400"/><rect x="658.45" y="272.1" width="1" height="21.9" fill="#28ff28"/><rect x="661.30" y="271.0" width="2.0" height="23.0" fill="#00b400"/><rect x="661.30" y="271.0" width="1" height="23.0" fill="#28ff28"/><rect x="664.15" y="270.5" width="2.0" height="23.5" fill="#00b400"/><rect x="664.15" y="270.5" width="1" height="23.5" fill="#28ff28"/><path d="M382.5 264.1 L385.4 273.1 L388.2 272.4 L391.1 263.7 L393.9 263.6 L396.8 255.5 L399.6 265.9 L402.5 257.7 L405.3 267.8 L408.2 245.6 L411.0 264.6 L413.9 259.8 L416.7 254.2 L419.6 261.5 L422.4 257.4 L425.3 255.6 L428.1 257.9 L431.0 244.4 L433.8 254.5 L436.7 258.0 L439.5 247.5 L442.4 240.4 L445.2 252.0 L448.1 243.5 L450.9 235.4 L453.8 233.9 L456.6 240.0 L459.5 228.5 L462.3 222.3 L465.2 223.7 L468.0 212.4 L470.9 205.6 L473.7 202.7 L476.6 206.3 L479.4 204.4 L482.3 195.3 L485.1 191.4 L488.0 195.3 L490.8 187.0 L493.7 189.0 L496.5 191.7 L499.4 190.8 L502.2 196.8 L505.1 179.7 L507.9 187.4 L510.8 190.2 L513.6 185.3 L516.5 196.0 L519.3 189.7 L522.2 194.9 L525.0 203.9 L527.9 193.4 L530.7 193.2 L533.6 189.4 L536.4 189.8 L539.3 167.3 L542.1 187.0 L545.0 182.4 L547.8 169.4 L550.7 190.7 L553.5 191.9 L556.4 199.0 L559.2 194.9 L562.1 200.7 L564.9 208.1 L567.8 205.1 L570.6 211.0 L573.5 220.8 L576.3 226.3 L579.2 229.4 L582.0 240.6 L584.9 241.4 L587.7 240.3 L590.6 252.1 L593.4 256.8 L596.3 262.3 L599.1 242.8 L602.0 259.3 L604.8 256.2 L607.7 255.0 L610.5 253.5 L613.4 263.3 L616.2 245.5 L619.1 258.8 L621.9 264.2 L624.8 248.9 L627.6 259.9 L630.5 252.7 L633.3 263.5 L636.2 269.3 L639.0 269.7 L641.9 250.7 L644.7 255.1 L647.6 270.3 L650.4 269.0 L653.3 270.1 L656.1 255.0 L659.0 259.9 L661.8 260.3 L664.7 266.1" fill="none" stroke="#ff20ff" stroke-width="0.8"/><rect x="382.00" y="264.1" width="1.2" height="7.9" fill="#ff30ff"/><rect x="384.85" y="273.1" width="1.2" height="5.8" fill="#ff30ff"/><rect x="387.70" y="272.4" width="1.2" height="5.3" fill="#ff30ff"/><rect x="390.55" y="263.7" width="1.2" height="4.1" fill="#ff30ff"/><rect x="393.40" y="263.6" width="1.2" height="4.8" fill="#ff30ff"/><rect x="396.25" y="255.5" width="1.2" height="11.2" fill="#ff30ff"/><rect x="399.10" y="265.9" width="1.2" height="6.4" fill="#ff30ff"/><rect x="401.95" y="257.7" width="1.2" height="10.7" fill="#ff30ff"/><rect x="404.80" y="267.8" width="1.2" height="4.6" fill="#ff30ff"/><rect x="407.65" y="245.6" width="1.2" height="12.1" fill="#ff30ff"/><rect x="410.50" y="264.6" width="1.2" height="11.5" fill="#ff30ff"/><rect x="413.35" y="259.8" width="1.2" height="6.7" fill="#ff30ff"/><rect x="416.20" y="254.2" width="1.2" height="16.1" fill="#ff30ff"/><rect x="419.05" y="261.5" width="1.2" height="3.9" fill="#ff30ff"/><rect x="421.90" y="257.4" width="1.2" height="6.3" fill="#ff30ff"/><rect x="424.75" y="255.6" width="1.2" height="12.2" fill="#ff30ff"/><rect x="427.60" y="257.9" width="1.2" height="11.4" fill="#ff30ff"/><rect x="430.45" y="244.4" width="1.2" height="18.9" fill="#ff30ff"/><rect x="433.30" y="254.5" width="1.2" height="8.4" fill="#ff30ff"/><rect x="436.15" y="258.0" width="1.2" height="7.4" fill="#ff30ff"/><rect x="439.00" y="247.5" width="1.2" height="7.1" fill="#ff30ff"/><rect x="441.85" y="240.4" width="1.2" height="8.5" fill="#ff30ff"/><rect x="444.70" y="252.0" width="1.2" height="5.1" fill="#ff30ff"/><rect x="447.55" y="243.5" width="1.2" height="5.6" fill="#ff30ff"/><rect x="450.40" y="235.4" width="1.2" height="4.7" fill="#ff30ff"/><rect x="453.25" y="233.9" width="1.2" height="10.1" fill="#ff30ff"/><rect x="456.10" y="240.0" width="1.2" height="3.6" fill="#ff30ff"/><rect x="458.95" y="228.5" width="1.2" height="9.0" fill="#ff30ff"/><rect x="461.80" y="222.3" width="1.2" height="6.0" fill="#ff30ff"/><rect x="464.65" y="223.7" width="1.2" height="5.5" fill="#ff30ff"/><rect x="467.50" y="212.4" width="1.2" height="16.3" fill="#ff30ff"/><rect x="470.35" y="205.6" width="1.2" height="12.2" fill="#ff30ff"/><rect x="473.20" y="202.7" width="1.2" height="8.3" fill="#ff30ff"/><rect x="476.05" y="206.3" width="1.2" height="7.0" fill="#ff30ff"/><rect x="478.90" y="204.4" width="1.2" height="7.0" fill="#ff30ff"/><rect x="481.75" y="195.3" width="1.2" height="6.8" fill="#ff30ff"/><rect x="484.60" y="191.4" width="1.2" height="11.4" fill="#ff30ff"/><rect x="487.45" y="195.3" width="1.2" height="8.4" fill="#ff30ff"/><rect x="490.30" y="187.0" width="1.2" height="9.6" fill="#ff30ff"/><rect x="493.15" y="189.0" width="1.2" height="4.2" fill="#ff30ff"/><rect x="496.00" y="191.7" width="1.2" height="7.7" fill="#ff30ff"/><rect x="498.85" y="190.8" width="1.2" height="7.9" fill="#ff30ff"/><rect x="501.70" y="196.8" width="1.2" height="6.4" fill="#ff30ff"/><rect x="504.55" y="179.7" width="1.2" height="10.3" fill="#ff30ff"/><rect x="507.40" y="187.4" width="1.2" height="6.8" fill="#ff30ff"/><rect x="510.25" y="190.2" width="1.2" height="4.1" fill="#ff30ff"/><rect x="513.10" y="185.3" width="1.2" height="5.0" fill="#ff30ff"/><rect x="515.95" y="196.0" width="1.2" height="5.5" fill="#ff30ff"/><rect x="518.80" y="189.7" width="1.2" height="15.0" fill="#ff30ff"/><rect x="521.65" y="194.9" width="1.2" height="3.9" fill="#ff30ff"/><rect x="524.50" y="203.9" width="1.2" height="4.9" fill="#ff30ff"/><rect x="527.35" y="193.4" width="1.2" height="10.0" fill="#ff30ff"/><rect x="530.20" y="193.2" width="1.2" height="7.0" fill="#ff30ff"/><rect x="533.05" y="189.4" width="1.2" height="7.4" fill="#ff30ff"/><rect x="535.90" y="189.8" width="1.2" height="7.8" fill="#ff30ff"/><rect x="538.75" y="167.3" width="1.2" height="15.6" fill="#ff30ff"/><rect x="541.60" y="187.0" width="1.2" height="8.0" fill="#ff30ff"/><rect x="544.45" y="182.4" width="1.2" height="14.5" fill="#ff30ff"/><rect x="547.30" y="169.4" width="1.2" height="16.3" fill="#ff30ff"/><rect x="550.15" y="190.7" width="1.2" height="8.4" fill="#ff30ff"/><rect x="553.00" y="191.9" width="1.2" height="5.8" fill="#ff30ff"/><rect x="555.85" y="199.0" width="1.2" height="6.2" fill="#ff30ff"/><rect x="558.70" y="194.9" width="1.2" height="6.9" fill="#ff30ff"/><rect x="561.55" y="200.7" width="1.2" height="6.8" fill="#ff30ff"/><rect x="564.40" y="208.1" width="1.2" height="4.7" fill="#ff30ff"/><rect x="567.25" y="205.1" width="1.2" height="4.5" fill="#ff30ff"/><rect x="570.10" y="211.0" width="1.2" height="12.5" fill="#ff30ff"/><rect x="572.95" y="220.8" width="1.2" height="4.5" fill="#ff30ff"/><rect x="575.80" y="226.3" width="1.2" height="8.0" fill="#ff30ff"/><rect x="578.65" y="229.4" width="1.2" height="4.3" fill="#ff30ff"/><rect x="581.50" y="240.6" width="1.2" height="6.3" fill="#ff30ff"/><rect x="584.35" y="241.4" width="1.2" height="7.2" fill="#ff30ff"/><rect x="587.20" y="240.3" width="1.2" height="8.4" fill="#ff30ff"/><rect x="590.05" y="252.1" width="1.2" height="5.4" fill="#ff30ff"/><rect x="592.90" y="256.8" width="1.2" height="5.4" fill="#ff30ff"/><rect x="595.75" y="262.3" width="1.2" height="4.1" fill="#ff30ff"/><rect x="598.60" y="242.8" width="1.2" height="6.2" fill="#ff30ff"/><rect x="601.45" y="259.3" width="1.2" height="4.5" fill="#ff30ff"/><rect x="604.30" y="256.2" width="1.2" height="6.5" fill="#ff30ff"/><rect x="607.15" y="255.0" width="1.2" height="5.8" fill="#ff30ff"/><rect x="610.00" y="253.5" width="1.2" height="3.6" fill="#ff30ff"/><rect x="612.85" y="263.3" width="1.2" height="7.0" fill="#ff30ff"/><rect x="615.70" y="245.5" width="1.2" height="11.5" fill="#ff30ff"/><rect x="618.55" y="258.8" width="1.2" height="8.8" fill="#ff30ff"/><rect x="621.40" y="264.2" width="1.2" height="8.1" fill="#ff30ff"/><rect x="624.25" y="248.9" width="1.2" height="7.9" fill="#ff30ff"/><rect x="627.10" y="259.9" width="1.2" height="4.7" fill="#ff30ff"/><rect x="629.95" y="252.7" width="1.2" height="6.9" fill="#ff30ff"/><rect x="632.80" y="263.5" width="1.2" height="5.2" fill="#ff30ff"/><rect x="635.65" y="269.3" width="1.2" height="6.9" fill="#ff30ff"/><rect x="638.50" y="269.7" width="1.2" height="9.9" fill="#ff30ff"/><rect x="641.35" y="250.7" width="1.2" height="8.6" fill="#ff30ff"/><rect x="644.20" y="255.1" width="1.2" height="11.4" fill="#ff30ff"/><rect x="647.05" y="270.3" width="1.2" height="3.8" fill="#ff30ff"/><rect x="649.90" y="269.0" width="1.2" height="10.5" fill="#ff30ff"/><rect x="652.75" y="270.1" width="1.2" height="3.6" fill="#ff30ff"/><rect x="655.60" y="255.0" width="1.2" height="12.8" fill="#ff30ff"/><rect x="658.45" y="259.9" width="1.2" height="14.2" fill="#ff30ff"/><rect x="661.30" y="260.3" width="1.2" height="12.6" fill="#ff30ff"/><rect x="664.15" y="266.1" width="1.2" height="6.4" fill="#ff30ff"/></g><rect x="382" y="129" width="283" height="164" fill="none" stroke="#c4c4c4" stroke-width="2"/></svg><div style="position:absolute;left:383px;top:292px;width:281px;height:2px;background:#20e020;"></div><div class="t" style="left:346.1px;top:296.00px;font-size:12.4px;line-height:12.4px;font-weight:bold;color:#fff;">Center 2 GHz</div><div class="t" style="left:346.1px;top:311.70px;font-size:12.4px;line-height:12.4px;font-weight:bold;color:#fff;">Res BW 191.735 kHz</div><div class="t" style="left:64.5px;width:600px;text-align:right;top:296.00px;font-size:12.4px;line-height:12.4px;font-weight:bold;color:#fff;">Span 39.0625 MHz</div><div class="t" style="left:64.5px;width:600px;text-align:right;top:311.70px;font-size:12.4px;line-height:12.4px;font-weight:bold;color:#fff;">TimeLen 199.2&nbsp; Sym</div><div class="t" style="left:10px;top:342.09px;font-size:12.3px;line-height:12.3px;font-weight:normal;color:#fff;">Ch1 Spectrum</div><div class="t" style="left:9px;top:362.02px;font-size:11.2px;line-height:11.2px;font-weight:bold;color:#e0e0e0;">10 dB/div</div><div class="t" style="left:73px;top:359.80px;font-size:12.4px;line-height:12.4px;font-weight:bold;color:#fff;">Ref -12 dBm</div><div class="t" style="left:9.5px;top:376.04px;font-size:10px;line-height:10px;font-weight:bold;color:#e0e0e0;">Log</div><div class="t" style="left:-558px;width:600px;text-align:right;top:386.74px;font-size:10px;line-height:10px;font-weight:normal;color:#c8c8c8;">-22</div><div class="t" style="left:-558px;width:600px;text-align:right;top:403.34px;font-size:10px;line-height:10px;font-weight:normal;color:#c8c8c8;">-32</div><div class="t" style="left:-558px;width:600px;text-align:right;top:419.94px;font-size:10px;line-height:10px;font-weight:normal;color:#c8c8c8;">-42</div><div class="t" style="left:-558px;width:600px;text-align:right;top:436.54px;font-size:10px;line-height:10px;font-weight:normal;color:#c8c8c8;">-52</div><div class="t" style="left:-558px;width:600px;text-align:right;top:453.14px;font-size:10px;line-height:10px;font-weight:normal;color:#c8c8c8;">-62</div><div class="t" style="left:-558px;width:600px;text-align:right;top:469.74px;font-size:10px;line-height:10px;font-weight:normal;color:#c8c8c8;">-72</div><div class="t" style="left:-558px;width:600px;text-align:right;top:486.34px;font-size:10px;line-height:10px;font-weight:normal;color:#c8c8c8;">-82</div><div class="t" style="left:-558px;width:600px;text-align:right;top:502.94px;font-size:10px;line-height:10px;font-weight:normal;color:#c8c8c8;">-92</div><div class="t" style="left:-558px;width:600px;text-align:right;top:519.53px;font-size:10px;line-height:10px;font-weight:normal;color:#c8c8c8;">-102</div><svg style="position:absolute;left:0;top:0" width="802" height="601"><line x1="73.5" y1="375" x2="73.5" y2="541" stroke="#b0b0b0" stroke-width="1"/><line x1="45" y1="391.5" x2="330" y2="391.5" stroke="#b0b0b0" stroke-width="1"/><line x1="101.5" y1="375" x2="101.5" y2="541" stroke="#b0b0b0" stroke-width="1"/><line x1="45" y1="408.5" x2="330" y2="408.5" stroke="#b0b0b0" stroke-width="1"/><line x1="130.5" y1="375" x2="130.5" y2="541" stroke="#b0b0b0" stroke-width="1"/><line x1="45" y1="424.5" x2="330" y2="424.5" stroke="#b0b0b0" stroke-width="1"/><line x1="158.5" y1="375" x2="158.5" y2="541" stroke="#b0b0b0" stroke-width="1"/><line x1="45" y1="441.5" x2="330" y2="441.5" stroke="#b0b0b0" stroke-width="1"/><line x1="187.5" y1="375" x2="187.5" y2="541" stroke="#b0b0b0" stroke-width="1"/><line x1="45" y1="458.5" x2="330" y2="458.5" stroke="#b0b0b0" stroke-width="1"/><line x1="215.5" y1="375" x2="215.5" y2="541" stroke="#b0b0b0" stroke-width="1"/><line x1="45" y1="474.5" x2="330" y2="474.5" stroke="#b0b0b0" stroke-width="1"/><line x1="244.5" y1="375" x2="244.5" y2="541" stroke="#b0b0b0" stroke-width="1"/><line x1="45" y1="491.5" x2="330" y2="491.5" stroke="#b0b0b0" stroke-width="1"/><line x1="272.5" y1="375" x2="272.5" y2="541" stroke="#b0b0b0" stroke-width="1"/><line x1="45" y1="507.5" x2="330" y2="507.5" stroke="#b0b0b0" stroke-width="1"/><line x1="301.5" y1="375" x2="301.5" y2="541" stroke="#b0b0b0" stroke-width="1"/><line x1="45" y1="524.5" x2="330" y2="524.5" stroke="#b0b0b0" stroke-width="1"/><rect x="46" y="376" width="283" height="164" fill="none" stroke="#c4c4c4" stroke-width="2"/></svg><svg style="position:absolute;left:0;top:0" width="802" height="601"><path d="M46.0 488.3 L47.2 496.4 L48.5 491.8 L49.8 499.2 L51.0 522.9 L52.2 500.8 L53.5 497.5 L54.8 511.7 L56.0 517.4 L57.2 493.8 L58.5 493.0 L59.8 492.4 L61.0 506.0 L62.2 487.2 L63.5 490.7 L64.8 487.8 L66.0 499.0 L67.2 514.2 L68.5 500.4 L69.8 498.2 L71.0 487.3 L72.2 519.3 L73.5 510.4 L74.8 494.6 L76.0 502.0 L77.2 496.4 L78.5 491.9 L79.8 519.6 L81.0 488.5 L82.2 540.0 L83.5 486.9 L84.8 493.8 L86.0 503.0 L87.2 496.2 L88.5 490.9 L89.8 498.6 L91.0 500.0 L92.2 492.4 L93.5 489.8 L94.8 501.4 L96.0 485.8 L97.2 470.8 L98.5 442.8 L99.8 439.1 L101.0 474.9 L102.2 441.3 L103.5 454.4 L104.8 430.7 L106.0 429.9 L107.2 429.6 L108.5 429.3 L109.8 420.0 L111.0 429.9 L112.2 425.9 L113.5 408.7 L114.8 413.5 L116.0 412.2 L117.2 430.6 L118.5 414.0 L119.8 419.2 L121.0 427.9 L122.2 406.0 L123.5 401.9 L124.8 407.9 L126.0 399.1 L127.2 423.7 L128.5 406.6 L129.8 398.6 L131.0 417.8 L132.2 395.2 L133.5 407.5 L134.8 404.4 L136.0 396.2 L137.2 393.1 L138.5 399.0 L139.8 420.5 L141.0 398.8 L142.2 392.2 L143.5 404.9 L144.8 403.9 L146.0 405.9 L147.2 398.8 L148.5 398.1 L149.8 403.4 L151.0 464.5 L152.2 403.4 L153.5 410.0 L154.8 393.1 L156.0 406.2 L157.2 404.6 L158.5 404.4 L159.8 398.4 L161.0 418.2 L162.2 406.9 L163.5 422.3 L164.8 401.8 L166.0 393.5 L167.2 414.3 L168.5 404.9 L169.8 404.9 L171.0 414.7 L172.2 399.2 L173.5 408.3 L174.8 402.8 L176.0 404.3 L177.2 397.1 L178.5 432.7 L179.8 452.0 L181.0 413.8 L182.2 409.5 L183.5 388.9 L184.8 399.7 L186.0 404.1 L187.2 398.8 L188.5 405.9 L189.8 398.5 L191.0 413.8 L192.2 400.5 L193.5 412.6 L194.8 404.3 L196.0 398.8 L197.2 401.7 L198.5 401.6 L199.8 409.5 L201.0 441.0 L202.2 428.1 L203.5 417.8 L204.8 406.9 L206.0 416.4 L207.2 427.6 L208.5 405.4 L209.8 423.7 L211.0 403.2 L212.2 411.8 L213.5 408.8 L214.8 399.0 L216.0 404.9 L217.2 399.2 L218.5 408.1 L219.8 409.8 L221.0 402.0 L222.2 405.9 L223.5 399.1 L224.8 408.4 L226.0 403.4 L227.2 404.2 L228.5 397.9 L229.8 410.4 L231.0 406.0 L232.2 403.5 L233.5 429.1 L234.8 432.9 L236.0 411.2 L237.2 398.5 L238.5 397.5 L239.8 426.4 L241.0 402.3 L242.2 401.4 L243.5 397.0 L244.8 404.4 L246.0 402.3 L247.2 412.9 L248.5 405.8 L249.8 403.2 L251.0 408.8 L252.2 418.1 L253.5 403.4 L254.8 412.7 L256.0 399.9 L257.2 405.8 L258.5 402.9 L259.8 419.3 L261.0 416.1 L262.2 424.9 L263.5 447.2 L264.8 455.1 L266.0 440.9 L267.2 440.2 L268.5 458.2 L269.8 450.3 L271.0 484.2 L272.2 499.1 L273.5 490.9 L274.8 479.4 L276.0 491.9 L277.2 484.4 L278.5 493.9 L279.8 489.5 L281.0 498.2 L282.2 484.6 L283.5 502.7 L284.8 481.7 L286.0 502.6 L287.2 495.1 L288.5 485.9 L289.8 507.9 L291.0 487.7 L292.2 499.2 L293.5 506.8 L294.8 540.0 L296.0 518.6 L297.2 496.3 L298.5 492.2 L299.8 507.8 L301.0 488.7 L302.2 494.2 L303.5 509.2 L304.8 485.6 L306.0 481.9 L307.2 506.3 L308.5 488.0 L309.8 488.5 L311.0 487.8 L312.2 489.2 L313.5 509.9 L314.8 494.9 L316.0 515.7 L317.2 495.8 L318.5 492.8 L319.8 489.7 L321.0 493.5 L322.2 483.8 L323.5 487.1 L324.8 492.6 L326.0 490.6 L327.2 494.0 L328.5 490.5" fill="none" stroke="#20dce4" stroke-width="1.1" shape-rendering="crispEdges"/></svg><div class="t" style="left:9.6px;top:543.00px;font-size:12.4px;line-height:12.4px;font-weight:bold;color:#fff;">Center 2 GHz</div><div class="t" style="left:9.6px;top:558.70px;font-size:12.4px;line-height:12.4px;font-weight:bold;color:#fff;">Res BW 159.14 kHz</div><div class="t" style="left:-271px;width:600px;text-align:right;top:543.10px;font-size:12.4px;line-height:12.4px;font-weight:bold;color:#fff;">Span 25 MHz</div><div class="t" style="left:-271px;width:600px;text-align:right;top:558.90px;font-size:12.4px;line-height:12.4px;font-weight:bold;color:#fff;">TimeLen 24 us</div><div class="t" style="left:346px;top:342.09px;font-size:12.3px;line-height:12.3px;font-weight:normal;color:#fff;">Ch1 8PSK Syms/Errs</div><div class="t" style="left:348.4px;top:364.79px;font-size:12.3px;line-height:12.3px;font-weight:normal;color:#14f08e;">EVM</div><div class="t" style="left:415px;top:364.79px;font-size:12.3px;line-height:12.3px;font-weight:normal;color:#14f08e;">=</div><div class="t" style="left:428.8px;top:364.79px;font-size:12.3px;line-height:12.3px;font-weight:normal;color:#14f08e;">460.62</div><div class="t" style="left:492.3px;top:364.79px;font-size:12.3px;line-height:12.3px;font-weight:normal;color:#14f08e;">m%rms</div><div class="t" style="left:-210px;width:600px;text-align:right;top:379.53px;font-size:12.3px;line-height:12.3px;font-weight:normal;color:#14f08e;">1.1418</div><div class="t" style="left:430px;top:379.53px;font-size:12.3px;line-height:12.3px;font-weight:normal;color:#14f08e;">% pk</div><div class="t" style="left:464.8px;top:379.53px;font-size:12.3px;line-height:12.3px;font-weight:normal;color:#14f08e;">at</div><div class="t" style="left:485.9px;top:379.53px;font-size:12.3px;line-height:12.3px;font-weight:normal;color:#14f08e;">sym</div><div class="t" style="left:-44.39999999999998px;width:600px;text-align:right;top:379.53px;font-size:12.3px;line-height:12.3px;font-weight:normal;color:#14f08e;">69</div><div class="t" style="left:348.4px;top:394.27px;font-size:12.3px;line-height:12.3px;font-weight:normal;color:#14f08e;">Mag Err</div><div class="t" style="left:415px;top:394.27px;font-size:12.3px;line-height:12.3px;font-weight:normal;color:#14f08e;">=</div><div class="t" style="left:428.8px;top:394.27px;font-size:12.3px;line-height:12.3px;font-weight:normal;color:#14f08e;">328.42</div><div class="t" style="left:492.3px;top:394.27px;font-size:12.3px;line-height:12.3px;font-weight:normal;color:#14f08e;">m%rms</div><div class="t" style="left:-210px;width:600px;text-align:right;top:409.01px;font-size:12.3px;line-height:12.3px;font-weight:normal;color:#14f08e;">800.15</div><div class="t" style="left:422.7px;top:409.01px;font-size:12.3px;line-height:12.3px;font-weight:normal;color:#14f08e;">m%pk</div><div class="t" style="left:464.8px;top:409.01px;font-size:12.3px;line-height:12.3px;font-weight:normal;color:#14f08e;">at</div><div class="t" style="left:485.9px;top:409.01px;font-size:12.3px;line-height:12.3px;font-weight:normal;color:#14f08e;">sym</div><div class="t" style="left:-44.39999999999998px;width:600px;text-align:right;top:409.01px;font-size:12.3px;line-height:12.3px;font-weight:normal;color:#14f08e;">139</div><div class="t" style="left:348.4px;top:423.75px;font-size:12.3px;line-height:12.3px;font-weight:normal;color:#14f08e;">Phase Err</div><div class="t" style="left:415px;top:423.75px;font-size:12.3px;line-height:12.3px;font-weight:normal;color:#14f08e;">=</div><div class="t" style="left:428.8px;top:423.75px;font-size:12.3px;line-height:12.3px;font-weight:normal;color:#14f08e;">185.04</div><div class="t" style="left:499.8px;top:423.75px;font-size:12.3px;line-height:12.3px;font-weight:normal;color:#14f08e;">mdeg</div><div class="t" style="left:-210px;width:600px;text-align:right;top:438.49px;font-size:12.3px;line-height:12.3px;font-weight:normal;color:#14f08e;">653.50</div><div class="t" style="left:408.9px;top:438.49px;font-size:12.3px;line-height:12.3px;font-weight:normal;color:#14f08e;">mdeg pk</div><div class="t" style="left:464.8px;top:438.49px;font-size:12.3px;line-height:12.3px;font-weight:normal;color:#14f08e;">at</div><div class="t" style="left:485.9px;top:438.49px;font-size:12.3px;line-height:12.3px;font-weight:normal;color:#14f08e;">sym</div><div class="t" style="left:-44.39999999999998px;width:600px;text-align:right;top:438.49px;font-size:12.3px;line-height:12.3px;font-weight:normal;color:#14f08e;">69</div><div class="t" style="left:348.4px;top:453.23px;font-size:12.3px;line-height:12.3px;font-weight:normal;color:#14f08e;">Freq Err</div><div class="t" style="left:415px;top:453.23px;font-size:12.3px;line-height:12.3px;font-weight:normal;color:#14f08e;">=</div><div class="t" style="left:428.8px;top:453.23px;font-size:12.3px;line-height:12.3px;font-weight:normal;color:#14f08e;">126.88</div><div class="t" style="left:513.4px;top:453.23px;font-size:12.3px;line-height:12.3px;font-weight:normal;color:#14f08e;">Hz</div><div class="t" style="left:348.4px;top:467.97px;font-size:12.3px;line-height:12.3px;font-weight:normal;color:#14f08e;">IQ Offset</div><div class="t" style="left:415px;top:467.97px;font-size:12.3px;line-height:12.3px;font-weight:normal;color:#14f08e;">=</div><div class="t" style="left:428.8px;top:467.97px;font-size:12.3px;line-height:12.3px;font-weight:normal;color:#14f08e;">-48.26</div><div class="t" style="left:513.4px;top:467.97px;font-size:12.3px;line-height:12.3px;font-weight:normal;color:#14f08e;">dB</div><div class="t" style="left:348.4px;top:482.71px;font-size:12.3px;line-height:12.3px;font-weight:normal;color:#14f08e;">Amp Droop</div><div class="t" style="left:415px;top:482.71px;font-size:12.3px;line-height:12.3px;font-weight:normal;color:#14f08e;">=</div><div class="t" style="left:428.8px;top:482.71px;font-size:12.3px;line-height:12.3px;font-weight:normal;color:#14f08e;">3.857</div><div class="t" style="left:477.8px;top:482.71px;font-size:12.3px;line-height:12.3px;font-weight:normal;color:#14f08e;">udB/sym</div><div class="t" style="left:348.4px;top:497.45px;font-size:12.3px;line-height:12.3px;font-weight:normal;color:#14f08e;">Quad Err</div><div class="t" style="left:415px;top:497.45px;font-size:12.3px;line-height:12.3px;font-weight:normal;color:#14f08e;">=</div><div class="t" style="left:428.8px;top:497.45px;font-size:12.3px;line-height:12.3px;font-weight:normal;color:#14f08e;">-230.68</div><div class="t" style="left:499.8px;top:497.45px;font-size:12.3px;line-height:12.3px;font-weight:normal;color:#14f08e;">mdeg</div><div class="t" style="left:348.4px;top:512.19px;font-size:12.3px;line-height:12.3px;font-weight:normal;color:#14f08e;">Gain Imb</div><div class="t" style="left:415px;top:512.19px;font-size:12.3px;line-height:12.3px;font-weight:normal;color:#14f08e;">=</div><div class="t" style="left:428.8px;top:512.19px;font-size:12.3px;line-height:12.3px;font-weight:normal;color:#14f08e;">-0.01</div><div class="t" style="left:513.4px;top:512.19px;font-size:12.3px;line-height:12.3px;font-weight:normal;color:#14f08e;">dB</div><div style="position:absolute;left:342px;top:529px;width:318px;height:1px;background:#14f08e;"></div><div style="position:absolute;left:342px;top:532px;width:318px;height:1px;background:#14f08e;"></div><div class="t" style="left:-217px;width:600px;text-align:right;top:541.60px;font-size:13px;line-height:13px;font-weight:normal;color:#10f080;">0</div><div class="t" style="left:393px;top:541.60px;font-size:13px;line-height:13px;font-weight:normal;color:#10f080;letter-spacing:0.3px;">10100100</div><div class="t" style="left:462px;top:541.60px;font-size:13px;line-height:13px;font-weight:normal;color:#10f080;letter-spacing:0.3px;">00101101</div><div class="t" style="left:532.4px;top:541.60px;font-size:13px;line-height:13px;font-weight:normal;color:#10f080;letter-spacing:0.3px;">00100010</div><div class="t" style="left:-217px;width:600px;text-align:right;top:555.90px;font-size:13px;line-height:13px;font-weight:normal;color:#10f080;">24</div><div class="t" style="left:393px;top:555.90px;font-size:13px;line-height:13px;font-weight:normal;color:#10f080;letter-spacing:0.3px;">11101000</div><div class="t" style="left:462px;top:555.90px;font-size:13px;line-height:13px;font-weight:normal;color:#10f080;letter-spacing:0.3px;">10110101</div><div class="t" style="left:532.4px;top:555.90px;font-size:13px;line-height:13px;font-weight:normal;color:#10f080;letter-spacing:0.3px;">10101011</div><div class="t" style="left:-217px;width:600px;text-align:right;top:570.20px;font-size:13px;line-height:13px;font-weight:normal;color:#10f080;">48</div><div class="t" style="left:393px;top:570.20px;font-size:13px;line-height:13px;font-weight:normal;color:#10f080;letter-spacing:0.3px;">00011010</div><div class="t" style="left:462px;top:570.20px;font-size:13px;line-height:13px;font-weight:normal;color:#10f080;letter-spacing:0.3px;">00011010</div><div class="t" style="left:532.4px;top:570.20px;font-size:13px;line-height:13px;font-weight:normal;color:#10f080;letter-spacing:0.3px;">01011010</div><div style="position:absolute;left:342px;top:575px;width:332px;height:1px;background:#f6f3e6;"></div><div style="position:absolute;left:660px;top:332px;width:13px;height:243px;background:#f8f8f2;border-left:1px solid #e0e0d8;box-sizing:border-box;"></div><div style="position:absolute;left:661px;top:333px;width:11px;height:12px;background:linear-gradient(#d8e4fc,#b8ccf4);border:1px solid #c0d0f0;box-sizing:border-box;border-radius:2px;"></div><svg style="position:absolute;left:661px;top:333px" width="11" height="12"><path d="M2.5 7.5 L5.5 4.5 L8.5 7.5" fill="none" stroke="#283c78" stroke-width="1.8"/></svg><div style="position:absolute;left:661px;top:347px;width:11px;height:88px;background:linear-gradient(to right,#c4d4fa,#b8ccf6);border:1px solid #b8c8f0;box-sizing:border-box;border-radius:2px;"></div><div style="position:absolute;left:664px;top:388px;width:5px;height:1px;background:#eef2ff;"></div><div style="position:absolute;left:664px;top:390px;width:5px;height:1px;background:#eef2ff;"></div><div style="position:absolute;left:664px;top:392px;width:5px;height:1px;background:#eef2ff;"></div><div style="position:absolute;left:661px;top:562px;width:11px;height:12px;background:linear-gradient(#d8e4fc,#b8ccf4);border:1px solid #c0d0f0;box-sizing:border-box;border-radius:2px;"></div><svg style="position:absolute;left:661px;top:562px" width="11" height="12"><path d="M2.5 4.5 L5.5 7.5 L8.5 4.5" fill="none" stroke="#283c78" stroke-width="1.8"/></svg><div style="position:absolute;left:674px;top:26px;width:3px;height:550px;background:#f6f3e6;"></div><div style="position:absolute;left:676px;top:26px;width:2px;height:551px;background:#101010;"></div><div style="position:absolute;left:678px;top:26px;width:119px;height:550px;background:#3a6c9e;"></div><div style="position:absolute;left:796px;top:26px;width:1.5px;height:551px;background:#101010;"></div><div style="position:absolute;left:678px;top:26px;width:119px;height:5px;background:linear-gradient(#0c1c38,#3a6c9e);"></div><div style="position:absolute;left:678px;top:54px;width:119px;height:3px;background:linear-gradient(#2a5488,#14305a);"></div><div style="position:absolute;left:678px;top:26px;width:2px;height:31px;background:linear-gradient(to right,#1a3050,#3a6c9e);"></div><div class="t" style="left:737px;top:35.13px;font-size:12.6px;line-height:12.6px;font-weight:bold;color:#fff;transform:translateX(-50%);text-shadow:0 0 1.5px #08204a;">Measurements</div><div style="position:absolute;left:678px;top:57px;width:119px;height:64px;background:linear-gradient(to bottom,#ffffff 0px,#e8f4fa 1px,#a8d4ea 5px,#80c0de 10px,#78b8da 40px,#6cb0d4 50px,#4a98c4 57px,#3a88b4 64px);"></div><div class="t" style="left:194.5px;width:600px;text-align:right;top:82.09px;font-size:15.6px;line-height:15.6px;font-weight:bold;color:#111;letter-spacing:-0.5px;">Vector Analysis</div><div style="position:absolute;left:678px;top:131px;width:119px;height:64px;background:linear-gradient(to bottom,#ffffff 0px,#e8f4fa 1px,#a8d4ea 5px,#80c0de 10px,#78b8da 40px,#6cb0d4 50px,#4a98c4 57px,#3a88b4 64px);"></div><div class="t" style="left:194.5px;width:600px;text-align:right;top:156.09px;font-size:15.6px;line-height:15.6px;font-weight:bold;color:#111;letter-spacing:-0.5px;">Analog Demod</div><div style="position:absolute;left:678px;top:205px;width:119px;height:64px;background:linear-gradient(to bottom,#ffffff 0px,#f0f8fc 2px,#d4ecf6 6px,#c8e4f2 14px,#c4e2f0 40px,#b8dcec 50px,#80bcd8 58px,#4a98c0 64px);"></div><div class="t" style="left:194.5px;width:600px;text-align:right;top:230.09px;font-size:15.6px;line-height:15.6px;font-weight:bold;color:#111;letter-spacing:-0.5px;">Digital Demod</div><div style="position:absolute;left:678px;top:279px;width:119px;height:64px;background:linear-gradient(to bottom,#ffffff 0px,#e8f4fa 1px,#a8d4ea 5px,#80c0de 10px,#78b8da 40px,#6cb0d4 50px,#4a98c4 57px,#3a88b4 64px);"></div><div class="t" style="left:194.5px;width:600px;text-align:right;top:294.59px;font-size:15.6px;line-height:15.6px;font-weight:bold;color:#111;letter-spacing:-0.5px;">WLAN DSSS/</div><div class="t" style="left:194.5px;width:600px;text-align:right;top:314.79px;font-size:15.6px;line-height:15.6px;font-weight:bold;color:#111;letter-spacing:-0.5px;">CCK/PBCC</div><div style="position:absolute;left:678px;top:353px;width:119px;height:64px;background:linear-gradient(to bottom,#ffffff 0px,#e8f4fa 1px,#a8d4ea 5px,#80c0de 10px,#78b8da 40px,#6cb0d4 50px,#4a98c4 57px,#3a88b4 64px);"></div><div class="t" style="left:194.5px;width:600px;text-align:right;top:378.09px;font-size:15.6px;line-height:15.6px;font-weight:bold;color:#111;letter-spacing:-0.5px;">WLAN OFDM</div><div style="position:absolute;left:5px;top:575px;width:792px;height:1.5px;background:#ece4c4;"></div><div style="position:absolute;left:5px;top:576.5px;width:792px;height:1.5px;background:#3c3830;"></div><div style="position:absolute;left:5px;top:578px;width:792px;height:19px;background:#e4e4e2;"></div><div style="position:absolute;left:5px;top:578px;width:23px;height:19px;background:#f8c800;"></div><div class="t" style="left:6px;top:582.50px;font-size:8.5px;line-height:8.5px;font-weight:normal;color:#222;">MSG</div><div style="position:absolute;left:508px;top:578px;width:1px;height:19px;background:#a09c90;"></div><div style="position:absolute;left:546px;top:578px;width:1px;height:19px;background:#a09c90;"></div><div class="t" style="left:510px;top:582.30px;font-size:8.5px;line-height:8.5px;font-weight:bold;color:#111;">STATUS</div><div style="position:absolute;left:5px;top:596px;width:792px;height:1.5px;background:#3a3a3a;"></div><div style="position:absolute;left:5px;top:597.5px;width:792px;height:1.5px;background:#d8b860;"></div>
</body></html>
